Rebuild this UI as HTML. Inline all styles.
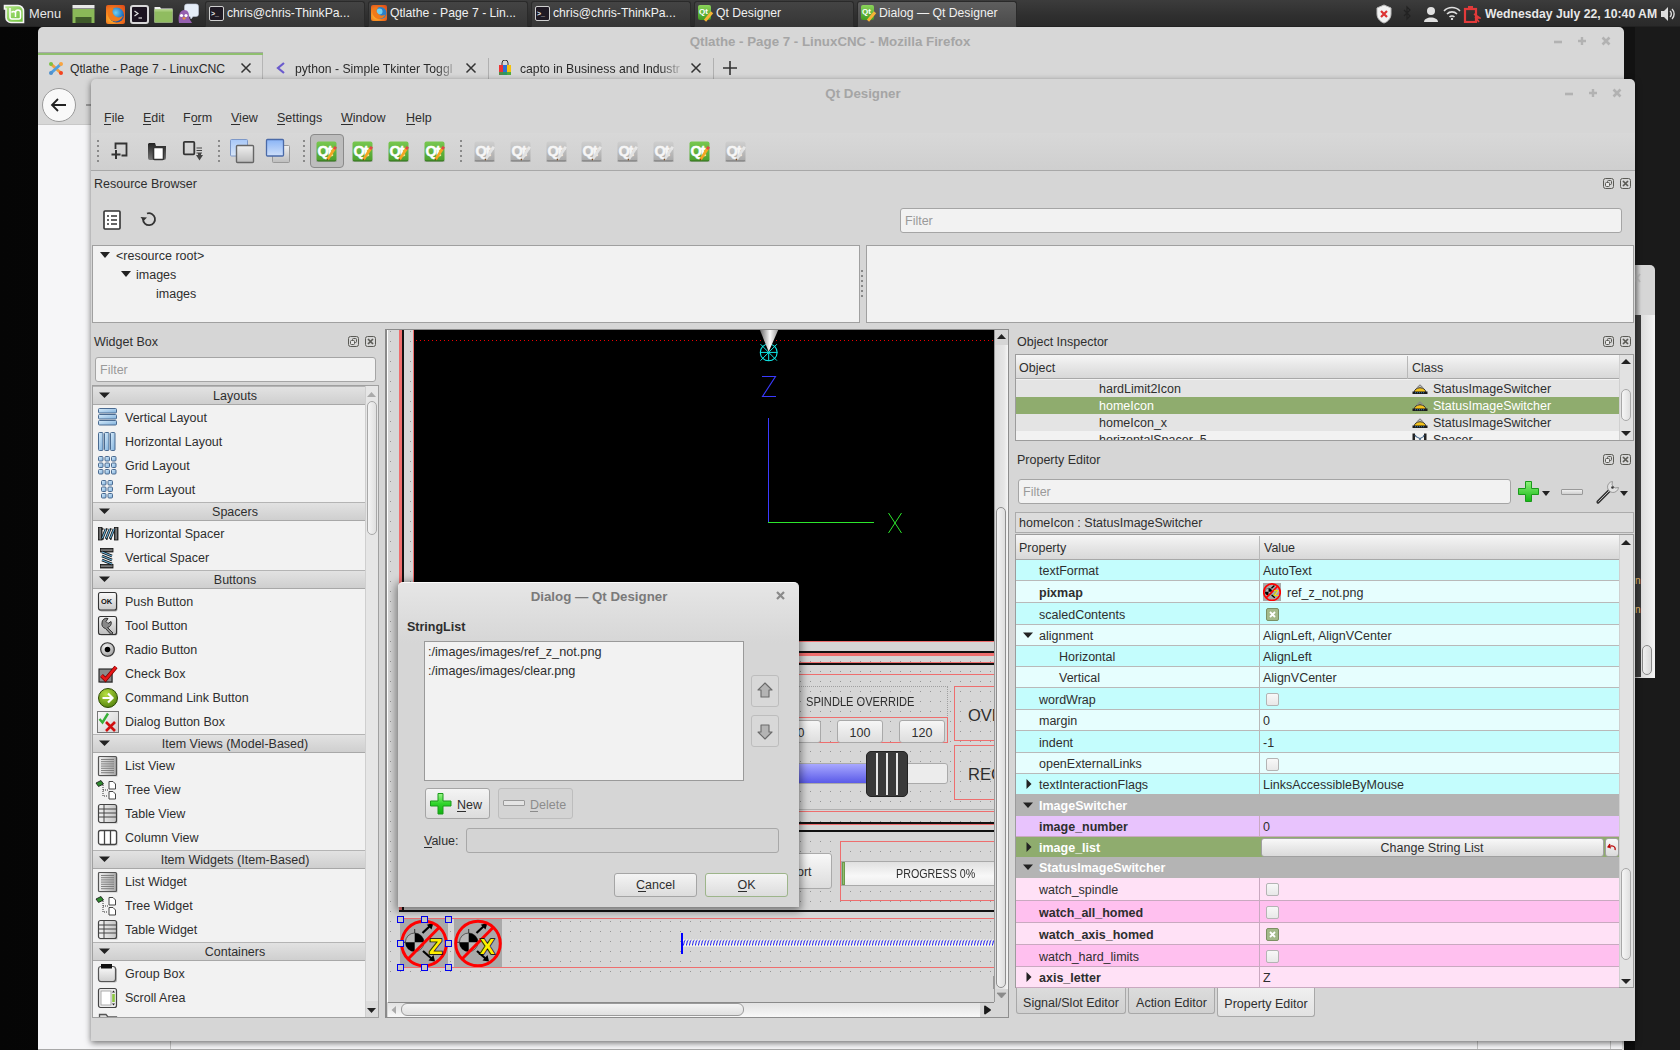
<!DOCTYPE html>
<html><head><meta charset="utf-8">
<style>
*{box-sizing:border-box;margin:0;padding:0}
html,body{width:1680px;height:1050px;overflow:hidden;background:#080808;font-family:"Liberation Sans",sans-serif;font-size:13px;color:#2e2e2e;position:relative}
.a{position:absolute}
.t{position:absolute;white-space:nowrap}
.grid{background-color:#d6d6d6;background-image:radial-gradient(circle at 0.5px 0.5px,#959595 0.6px,transparent 0.9px);background-size:10px 10px}
.redv{background:#ee6e6e}
.hdr{background:linear-gradient(#f6f6f6,#e6e6e6 50%,#d8d8d8);border-bottom:1px solid #a8a8a8}
</style></head><body>
<div class="a" style="left:0px;top:27px;width:1680px;height:1023px;background:linear-gradient(90deg,#050505,#0d0d0d 40%,#141414 70%,#0c0c0c)"></div>
<div class="a" style="left:0px;top:0px;width:1680px;height:27px;background:linear-gradient(#3c3c3c,#2f2f2f 60%,#2a2a2a);border-bottom:1px solid #222"></div>
<svg class="a" style="left:3px;top:4px;" width="22" height="20" viewBox="0 0 22 20"><defs><linearGradient id="mg" x1="0" y1="0" x2="1" y2="1"><stop offset="0" stop-color="#b6e88a"/><stop offset="1" stop-color="#6cbf3a"/></linearGradient></defs><path d="M1.5 1.5 H15 A5.5 5.5 0 0 1 20.5 7 V18.5 H8 A5 5 0 0 1 3 13.5 V5 H1.5 Z" fill="url(#mg)" stroke="#f4f4f4" stroke-width="1.6"/><path d="M7 4 V13 A2 2 0 0 0 9 15 H16 A1.5 1.5 0 0 0 17.5 13.5 V8.5 A2.5 2.5 0 0 0 12.5 8.5 V13 M12.5 8.5 A2.5 2.5 0 0 0 8.5 8.5" fill="none" stroke="#fff" stroke-width="1.5"/></svg>
<div class="t " style="left:29px;top:6.0px;font-size:12.5px;line-height:16px;color:#e8e8e8;font-size:12.8px">Menu</div>
<svg class="a" style="left:72px;top:5px;" width="23" height="18" viewBox="0 0 23 18"><rect x="0.5" y="0" width="22" height="3.5" fill="#e8e8e8"/><rect x="0.5" y="4" width="22" height="14" fill="#8ab858"/><rect x="3.5" y="12" width="16" height="6" fill="#3f5a2a"/></svg>
<svg class="a" style="left:106px;top:5px;" width="19" height="19" viewBox="0 0 19 19"><defs><radialGradient id="ffo" cx=".35" cy=".65" r=".8"><stop offset="0" stop-color="#ffd23a"/><stop offset=".5" stop-color="#f4801e"/><stop offset="1" stop-color="#e0501a"/></radialGradient><radialGradient id="ffb" cx=".45" cy=".35" r=".7"><stop offset="0" stop-color="#6fd0f0"/><stop offset=".6" stop-color="#2a7fc8"/><stop offset="1" stop-color="#1a3f90"/></radialGradient></defs><rect x="0" y="0" width="19" height="19" rx="2" fill="url(#ffo)"/><circle cx="10.5" cy="10" r="7.5" fill="url(#ffb)"/><path d="M2 6 C3 3 6 2 8 4 C6 5 6 8 8 10 C10 13 14 13 17 11 C15 16 9 18 5 15 C2 13 1 9 2 6 Z" fill="#f07a1a"/></svg>
<svg class="a" style="left:130px;top:5px;" width="19" height="19" viewBox="0 0 19 19"><rect x="1" y="1" width="17" height="17" rx="2" fill="#1c1420" stroke="#d8d8d8" stroke-width="2"/><path d="M4.5 6 L8 8.5 L4.5 11" fill="none" stroke="#e0e0e0" stroke-width="1.2"/><path d="M8.5 13 H12" stroke="#e0e0e0" stroke-width="1.2"/></svg>
<svg class="a" style="left:154px;top:5px;" width="19" height="18" viewBox="0 0 19 18"><path d="M0.5 2 H6 L7 3.5 H18.5 V17.5 H0.5 Z" fill="#f2f2f2"/><rect x="0.5" y="4.5" width="18" height="13" fill="#90bc60"/><rect x="0.5" y="4.5" width="18" height="2" fill="#a9ce7e"/></svg>
<svg class="a" style="left:177px;top:3px;" width="22" height="21" viewBox="0 0 22 21"><path d="M10 1 H19 A2.5 2.5 0 0 1 21.5 3.5 V11 A2.5 2.5 0 0 1 19 13.5 H16 L14 16 L13 13.5 H10 A2.5 2.5 0 0 1 7.5 11 V3.5 A2.5 2.5 0 0 1 10 1 Z" fill="#e6eef8" stroke="#c0c8d8" stroke-width=".6"/><path d="M2 20 C1 14 2 8 7 7 C11 7 12 10 12 13 C12 16 14 18 15 20 Z" fill="#9660b0"/><circle cx="4.5" cy="12.5" r="1.6" fill="#fff"/><circle cx="9" cy="12.5" r="1.6" fill="#fff"/><path d="M5 14.5 L7 17 L9.5 14.5 Z" fill="#f09030"/></svg>
<div class="a" style="left:205px;top:1px;width:160px;height:26px;background:linear-gradient(#444,#353535);border-radius:3px 3px 0 0;border:1px solid #2a2a2a;border-bottom:none"></div>
<div class="a" style="left:209px;top:6px;width:15px;height:15px;background:#1f1a24;border:1.5px solid #d0d0d0;border-radius:2px"></div>
<div class="t " style="left:211px;top:8.5px;font-size:7px;line-height:9px;color:#eee;font-weight:bold;">&gt;_</div>
<div class="t " style="left:227px;top:5.0px;font-size:12px;line-height:16px;color:#f0f0f0;font-size:12.2px">chris@chris-ThinkPa...</div>
<div class="a" style="left:368px;top:1px;width:160px;height:26px;background:linear-gradient(#444,#353535);border-radius:3px 3px 0 0;border:1px solid #2a2a2a;border-bottom:none"></div>
<svg class="a" style="left:371px;top:5px;" width="16" height="16" viewBox="0 0 16 16"><defs><radialGradient id="ffo2" cx=".35" cy=".65" r=".8"><stop offset="0" stop-color="#ffd23a"/><stop offset=".5" stop-color="#f4801e"/><stop offset="1" stop-color="#e0501a"/></radialGradient></defs><rect x="0" y="0" width="16" height="16" rx="2" fill="url(#ffo2)"/><circle cx="9.5" cy="8" r="6" fill="#2a7fc8"/><circle cx="8.5" cy="6.5" r="3" fill="#6fd0f0"/><path d="M1.5 5 C2.5 2.5 5 1.5 7 3.5 C5 4.5 5 7 7 8.5 C9 11 12 11 14.5 9.5 C13 13.5 8 15 4.5 13 C1.8 11 1 8 1.5 5 Z" fill="#f07a1a"/></svg>
<div class="t " style="left:390px;top:5.0px;font-size:12px;line-height:16px;color:#f0f0f0;font-size:12.2px">Qtlathe - Page 7 - Lin...</div>
<div class="a" style="left:531px;top:1px;width:160px;height:26px;background:linear-gradient(#444,#353535);border-radius:3px 3px 0 0;border:1px solid #2a2a2a;border-bottom:none"></div>
<div class="a" style="left:535px;top:6px;width:15px;height:15px;background:#1f1a24;border:1.5px solid #d0d0d0;border-radius:2px"></div>
<div class="t " style="left:537px;top:8.5px;font-size:7px;line-height:9px;color:#eee;font-weight:bold;">&gt;_</div>
<div class="t " style="left:553px;top:5.0px;font-size:12px;line-height:16px;color:#f0f0f0;font-size:12.2px">chris@chris-ThinkPa...</div>
<div class="a" style="left:694px;top:1px;width:160px;height:26px;background:linear-gradient(#444,#353535);border-radius:3px 3px 0 0;border:1px solid #2a2a2a;border-bottom:none"></div>
<div class="a" style="left:698px;top:5px;width:13px;height:15px;background:linear-gradient(#8cd45a,#3f9a22);border-radius:2px"></div>
<div class="t " style="left:699px;top:7.0px;font-size:8px;line-height:10px;color:#fff;font-weight:bold;">Qt</div>
<div class="a" style="left:707px;top:11px;width:3px;height:11px;background:#f5b335;transform:rotate(40deg)"></div>
<div class="t " style="left:716px;top:5.0px;font-size:12px;line-height:16px;color:#f0f0f0;font-size:12.2px">Qt Designer</div>
<div class="a" style="left:857px;top:1px;width:160px;height:26px;background:linear-gradient(#5e5e5e,#4a4a4a);border-radius:3px 3px 0 0;border:1px solid #2a2a2a;border-bottom:none"></div>
<div class="a" style="left:861px;top:5px;width:13px;height:15px;background:linear-gradient(#8cd45a,#3f9a22);border-radius:2px"></div>
<div class="t " style="left:862px;top:7.0px;font-size:8px;line-height:10px;color:#fff;font-weight:bold;">Qt</div>
<div class="a" style="left:870px;top:11px;width:3px;height:11px;background:#f5b335;transform:rotate(40deg)"></div>
<div class="t " style="left:879px;top:5.0px;font-size:12px;line-height:16px;color:#f0f0f0;font-size:12.2px">Dialog — Qt Designer</div>
<svg class="a" style="left:1375px;top:4px;" width="18" height="20" viewBox="0 0 18 20"><path d="M9 1 L16 4 V10 C16 15 12 18 9 19 C6 18 2 15 2 10 V4 Z" fill="#f2f2f2" stroke="#bbb"/><path d="M6 7 L12 13 M12 7 L6 13" stroke="#d33" stroke-width="2.2"/></svg>
<svg class="a" style="left:1402px;top:5px;" width="10" height="17" viewBox="0 0 10 17"><path d="M2 5 L8 11 L5 14 V2 L8 5 L2 11" fill="none" stroke="#222" stroke-width="1.2"/></svg>
<svg class="a" style="left:1423px;top:6px;" width="16" height="16" viewBox="0 0 16 16"><circle cx="8" cy="5" r="4" fill="#e0e0e0"/><path d="M1 16 C1 10 15 10 15 16 Z" fill="#e0e0e0"/></svg>
<svg class="a" style="left:1443px;top:6px;" width="18" height="14" viewBox="0 0 18 14"><path d="M1 5 A11 11 0 0 1 17 5" fill="none" stroke="#ddd" stroke-width="1.6"/><path d="M4 8 A7 7 0 0 1 14 8" fill="none" stroke="#ddd" stroke-width="1.6"/><path d="M6.5 11 A3.5 3.5 0 0 1 11.5 11" fill="none" stroke="#ddd" stroke-width="1.6"/><circle cx="9" cy="13" r="1.2" fill="#ddd"/></svg>
<svg class="a" style="left:1463px;top:5px;" width="18" height="18" viewBox="0 0 18 18"><rect x="2" y="4" width="11" height="13" fill="none" stroke="#e23a3a" stroke-width="2.2"/><rect x="5" y="1" width="5" height="3" fill="#e23a3a"/><path d="M11 9 L17 13 L13 13 L16 17" fill="none" stroke="#e23a3a" stroke-width="1.6"/></svg>
<div class="t " style="left:1485px;top:6.0px;font-size:13px;line-height:16px;color:#e8e8e8;font-weight:bold;font-size:12.2px">Wednesday July 22, 10:40 AM</div>
<svg class="a" style="left:1660px;top:6px;" width="18" height="16" viewBox="0 0 18 16"><path d="M1 5 H4 L8 1 V15 L4 11 H1 Z" fill="#ddd"/><path d="M10 5 A4 4 0 0 1 10 11 M12 3 A7 7 0 0 1 12 13" fill="none" stroke="#ddd" stroke-width="1.4"/></svg>
<div class="a" style="left:38px;top:27px;width:1586px;height:1023px;background:#d7d7d7;border-radius:5px 5px 0 0"></div>
<div class="t" style="left:580.0px;width:500px;text-align:center;top:34.0px;font-size:13px;line-height:16px;color:#a5a5a5;font-weight:bold;font-size:13.3px">Qtlathe - Page 7 - LinuxCNC - Mozilla Firefox</div>
<svg class="a" style="left:1550px;top:33px;" width="64" height="14" viewBox="0 0 64 14"><path d="M4 9 H12" stroke="#b2b2b2" stroke-width="2.6"/><path d="M32 4 V12 M28 8 H36" stroke="#b2b2b2" stroke-width="2.4"/><path d="M52.5 4.5 L59.5 11.5 M59.5 4.5 L52.5 11.5" stroke="#b2b2b2" stroke-width="2.6"/></svg>
<div class="a" style="left:38px;top:52px;width:225px;height:1px;background:#a9a9a9"></div>
<div class="a" style="left:38px;top:79px;width:1584px;height:1px;background:#b8b8b8"></div>
<div class="a" style="left:38px;top:53px;width:225px;height:27px;background:#d9d9d9;border-right:1px solid #b5b5b5"></div>
<div class="a" style="left:38px;top:53px;width:225px;height:2px;background:#8fbf6f"></div>
<svg class="a" style="left:48px;top:61px;" width="16" height="15" viewBox="0 0 16 15"><path d="M3 3 L13 12" stroke="#f0a040" stroke-width="3"/><path d="M13 3 L3 12" stroke="#50a0e0" stroke-width="3"/><circle cx="3" cy="3" r="2" fill="#7ac143"/><circle cx="13" cy="3" r="2" fill="#f9a541"/><circle cx="3" cy="12" r="2" fill="#5091cd"/><circle cx="13" cy="12" r="2" fill="#f44321"/></svg>
<div class="t " style="left:70px;top:61.0px;font-size:12px;line-height:16px;color:#2a2a2a;font-size:12.2px">Qtlathe - Page 7 - LinuxCNC</div>
<svg class="a" style="left:240px;top:62px;" width="12" height="12" viewBox="0 0 12 12"><path d="M1.5 1.5 L10.5 10.5 M10.5 1.5 L1.5 10.5" stroke="#333" stroke-width="1.5"/></svg>
<svg class="a" style="left:276px;top:62px;" width="10" height="12" viewBox="0 0 10 12"><path d="M8 1 L2 6 L8 11" fill="none" stroke="#6a5acd" stroke-width="2.2"/></svg>
<div class="t " style="left:295px;top:61.0px;font-size:12px;line-height:16px;color:#2a2a2a;font-size:12.2px;width:165px;overflow:hidden;-webkit-mask-image:linear-gradient(90deg,#000 85%,transparent)">python - Simple Tkinter Toggl</div>
<svg class="a" style="left:465px;top:62px;" width="12" height="12" viewBox="0 0 12 12"><path d="M1.5 1.5 L10.5 10.5 M10.5 1.5 L1.5 10.5" stroke="#333" stroke-width="1.5"/></svg>
<div class="a" style="left:488px;top:58px;width:1px;height:21px;background:#b0b0b0"></div>
<svg class="a" style="left:498px;top:60px;" width="14" height="16" viewBox="0 0 14 16"><rect x="1" y="5" width="4" height="10" fill="#e33"/><rect x="5" y="5" width="4" height="10" fill="#2c6fd6"/><rect x="9" y="5" width="4" height="10" fill="#f4c20d"/><rect x="1" y="12" width="12" height="3" fill="#2ca24a" opacity=".8"/><path d="M4 5 V3 A3 3 0 0 1 10 3 V5" fill="none" stroke="#333" stroke-width="1"/></svg>
<div class="t " style="left:520px;top:61.0px;font-size:12px;line-height:16px;color:#2a2a2a;font-size:12.2px;width:165px;overflow:hidden;-webkit-mask-image:linear-gradient(90deg,#000 85%,transparent)">capto in Business and Industr</div>
<svg class="a" style="left:690px;top:62px;" width="12" height="12" viewBox="0 0 12 12"><path d="M1.5 1.5 L10.5 10.5 M10.5 1.5 L1.5 10.5" stroke="#333" stroke-width="1.5"/></svg>
<div class="a" style="left:713px;top:58px;width:1px;height:21px;background:#b0b0b0"></div>
<svg class="a" style="left:723px;top:61px;" width="14" height="14" viewBox="0 0 14 14"><path d="M7 0 V14 M0 7 H14" stroke="#333" stroke-width="1.6"/></svg>
<div class="a" style="left:38px;top:80px;width:1584px;height:45px;background:#d7d7d7"></div>
<div class="a" style="left:38px;top:124px;width:1584px;height:1px;background:#c8c8c8"></div>
<div class="a" style="left:42px;top:88px;width:34px;height:34px;background:#f9f9f9;border:1px solid #9a9a9a;border-radius:50%"></div>
<svg class="a" style="left:50px;top:97px;" width="18" height="16" viewBox="0 0 18 16"><path d="M8 2 L2 8 L8 14 M2 8 H16" fill="none" stroke="#222" stroke-width="1.8"/></svg>
<div class="a" style="left:86px;top:104px;width:6px;height:2px;background:#999"></div>
<div class="a" style="left:38px;top:125px;width:1584px;height:925px;background:#f6f6f8"></div>
<div class="a" style="left:38px;top:1049px;width:1584px;height:1px;background:#a8a8a8"></div>
<div class="a" style="left:170px;top:1040px;width:1px;height:9px;background:#c4c4c4"></div>
<div class="a" style="left:1477px;top:1040px;width:1px;height:9px;background:#c4c4c4"></div>
<div class="a" style="left:1610px;top:1040px;width:1px;height:9px;background:#c4c4c4"></div>
<div class="a" style="left:1635px;top:27px;width:45px;height:1023px;background:#1a1a1a"></div>
<div class="a" style="left:1624px;top:27px;width:11px;height:1013px;background:#121212"></div>
<div class="a" style="left:1635px;top:265px;width:20px;height:413px;background:linear-gradient(90deg,#a8a8a8,#d6d6d6 6px);border-radius:0 5px 0 0"></div>
<svg class="a" style="left:1634px;top:273px;" width="8" height="11" viewBox="0 0 8 11"><path d="M0 1 L6 9 M6 1 L0 9" stroke="#b4b4b4" stroke-width="1.8"/></svg>
<div class="a" style="left:1635px;top:315px;width:6px;height:362px;background:#3a3a3a"></div>
<div class="a" style="left:1641px;top:315px;width:14px;height:363px;background:linear-gradient(90deg,#dcdcdc,#f4f4f4)"></div>
<div class="a" style="left:1642px;top:645px;width:10px;height:30px;background:linear-gradient(90deg,#f0f0f0,#dadada);border:1px solid #8a8a8a;border-radius:5px"></div>
<div class="t " style="left:1635px;top:576.0px;font-size:10px;line-height:10px;color:#e8c070;">n</div>
<div class="t " style="left:1635px;top:605.0px;font-size:10px;line-height:10px;color:#e8c070;">n</div>
<div class="a" style="left:91px;top:79px;width:1544px;height:962px;background:#d6d6d6;border-radius:5px 5px 0 0;box-shadow:0 2px 6px rgba(0,0,0,.55)"></div>
<div class="t" style="left:713.0px;width:300px;text-align:center;top:86.0px;font-size:13px;line-height:16px;color:#a5a5a5;font-weight:bold;font-size:13.3px">Qt Designer</div>
<svg class="a" style="left:1561px;top:85px;" width="64" height="14" viewBox="0 0 64 14"><path d="M4 9 H12" stroke="#b2b2b2" stroke-width="2.6"/><path d="M32 4 V12 M28 8 H36" stroke="#b2b2b2" stroke-width="2.4"/><path d="M52.5 4.5 L59.5 11.5 M59.5 4.5 L52.5 11.5" stroke="#b2b2b2" stroke-width="2.6"/></svg>
<div class="t " style="left:104px;top:110.0px;font-size:12.5px;line-height:16px;color:#2e2e2e;">File</div>
<div class="t " style="left:143px;top:110.0px;font-size:12.5px;line-height:16px;color:#2e2e2e;">Edit</div>
<div class="t " style="left:183px;top:110.0px;font-size:12.5px;line-height:16px;color:#2e2e2e;">Form</div>
<div class="t " style="left:231px;top:110.0px;font-size:12.5px;line-height:16px;color:#2e2e2e;">View</div>
<div class="t " style="left:277px;top:110.0px;font-size:12.5px;line-height:16px;color:#2e2e2e;">Settings</div>
<div class="t " style="left:341px;top:110.0px;font-size:12.5px;line-height:16px;color:#2e2e2e;">Window</div>
<div class="t " style="left:406px;top:110.0px;font-size:12.5px;line-height:16px;color:#2e2e2e;">Help</div>
<div class="a" style="left:104px;top:124px;width:7px;height:1px;background:#2e2e2e"></div>
<div class="a" style="left:143px;top:124px;width:8px;height:1px;background:#2e2e2e"></div>
<div class="a" style="left:193px;top:124px;width:8px;height:1px;background:#2e2e2e"></div>
<div class="a" style="left:231px;top:124px;width:9px;height:1px;background:#2e2e2e"></div>
<div class="a" style="left:277px;top:124px;width:8px;height:1px;background:#2e2e2e"></div>
<div class="a" style="left:341px;top:124px;width:12px;height:1px;background:#2e2e2e"></div>
<div class="a" style="left:406px;top:124px;width:9px;height:1px;background:#2e2e2e"></div>
<div class="a" style="left:91px;top:133px;width:1544px;height:38px;background:linear-gradient(#d8d8d8,#cfcfcf);border-bottom:1px solid #a8a8a8"></div>
<div class="a" style="left:97px;top:140px;width:2px;height:23px;background:repeating-linear-gradient(#8a8a8a 0 2px,transparent 2px 5px)"></div>
<div class="a" style="left:218px;top:140px;width:2px;height:23px;background:repeating-linear-gradient(#8a8a8a 0 2px,transparent 2px 5px)"></div>
<div class="a" style="left:303px;top:140px;width:2px;height:23px;background:repeating-linear-gradient(#8a8a8a 0 2px,transparent 2px 5px)"></div>
<div class="a" style="left:460px;top:140px;width:2px;height:23px;background:repeating-linear-gradient(#8a8a8a 0 2px,transparent 2px 5px)"></div>
<svg class="a" style="left:110px;top:141px;" width="20" height="20" viewBox="0 0 20 20"><path d="M5.5 8 V2.5 H16.5 V14.5 H11.5" fill="none" stroke="#333" stroke-width="1.8"/><path d="M6 9 V18 M1.5 13.5 H10.5" stroke="#333" stroke-width="2"/></svg>
<svg class="a" style="left:147px;top:141px;" width="20" height="20" viewBox="0 0 20 20"><defs><linearGradient id="og" x1="0" x2="0" y1="0" y2="1"><stop offset="0" stop-color="#222"/><stop offset="1" stop-color="#777"/></linearGradient></defs><path d="M1 3 V17 A2 2 0 0 0 3 19 H17 A2 2 0 0 0 19 17 V5 H9 L8 2 H2 Z" fill="url(#og)"/><rect x="6.5" y="6.5" width="10" height="12" rx="1" fill="#fff" stroke="#333" stroke-width="1.6"/></svg>
<svg class="a" style="left:182px;top:140px;" width="22" height="22" viewBox="0 0 22 22"><rect x="1.8" y="1.8" width="10.5" height="12.5" rx="1" fill="none" stroke="#333" stroke-width="1.8"/><path d="M14.5 8 H20 M14.5 10.5 H20 M14.5 13 H20" stroke="#444" stroke-width="1.2"/><path d="M14 15 H21 L17.5 20.5 Z" fill="#444"/><rect x="16" y="13" width="3" height="3" fill="#444"/></svg>
<svg class="a" style="left:229px;top:138px;" width="26" height="26" viewBox="0 0 26 26"><defs><linearGradient id="bl" x1="0" x2="0" y1="0" y2="1"><stop offset="0" stop-color="#a8c8f8"/><stop offset="1" stop-color="#d8e6f8"/></linearGradient><linearGradient id="gr" x1="0" x2="0" y1="0" y2="1"><stop offset="0" stop-color="#f0f0f0"/><stop offset="1" stop-color="#bdbdbd"/></linearGradient></defs><rect x="1.5" y="1.5" width="17" height="16.5" rx="1" fill="url(#bl)" stroke="#7d98c8" stroke-width="1"/><rect x="7.5" y="7.5" width="17" height="17" rx="1" fill="url(#gr)" stroke="#666" stroke-width="1.4"/></svg>
<svg class="a" style="left:265px;top:138px;" width="26" height="26" viewBox="0 0 26 26"><defs><linearGradient id="bl2" x1="0" x2="0" y1="0" y2="1"><stop offset="0" stop-color="#8ab4f6"/><stop offset="1" stop-color="#cfe0fa"/></linearGradient></defs><rect x="7.5" y="7.5" width="17" height="17" rx="1" fill="url(#gr)" stroke="#999" stroke-width="1"/><rect x="1.5" y="1.5" width="17" height="16.5" rx="1" fill="url(#bl2)" stroke="#4a6aa8" stroke-width="1.3"/></svg>
<div class="a" style="left:310px;top:134px;width:34px;height:34px;background:#bdbdbd;border:1px solid #8a8a8a;border-radius:4px"></div>
<svg class="a" style="left:316px;top:141px;" width="21" height="21" viewBox="0 0 21 21"><defs><linearGradient id="q316" x1="0" x2="0" y1="0" y2="1"><stop offset="0" stop-color="#78c850"/><stop offset="1" stop-color="#4a9e2c"/></linearGradient></defs><rect x="0.5" y="0.5" width="20" height="20" rx="2" fill="url(#q316)"/><rect x="0.5" y="19.5" width="20" height="1" fill="rgba(0,0,0,.35)"/><text x="1.4" y="14.5" font-family="Liberation Sans" font-weight="700" font-size="14.5" letter-spacing="-0.8" fill="#fff" stroke="#fff" stroke-width="0.5">Qt</text><path d="M11.5 18.5 L19 7" stroke="#f5a623" stroke-width="2.8" stroke-linecap="butt"/><path d="M18.2 8.2 L19.8 5.8" stroke="#e04848" stroke-width="2.8"/><path d="M11 19.2 L12 17.8" stroke="#7a4a20" stroke-width="1.2"/></svg>
<svg class="a" style="left:352px;top:141px;" width="21" height="21" viewBox="0 0 21 21"><defs><linearGradient id="q352" x1="0" x2="0" y1="0" y2="1"><stop offset="0" stop-color="#78c850"/><stop offset="1" stop-color="#4a9e2c"/></linearGradient></defs><rect x="0.5" y="0.5" width="20" height="20" rx="2" fill="url(#q352)"/><rect x="0.5" y="19.5" width="20" height="1" fill="rgba(0,0,0,.35)"/><text x="1.4" y="14.5" font-family="Liberation Sans" font-weight="700" font-size="14.5" letter-spacing="-0.8" fill="#fff" stroke="#fff" stroke-width="0.5">Qt</text><path d="M11.5 18.5 L19 7" stroke="#f5a623" stroke-width="2.8" stroke-linecap="butt"/><path d="M18.2 8.2 L19.8 5.8" stroke="#e04848" stroke-width="2.8"/><path d="M11 19.2 L12 17.8" stroke="#7a4a20" stroke-width="1.2"/></svg>
<svg class="a" style="left:388px;top:141px;" width="21" height="21" viewBox="0 0 21 21"><defs><linearGradient id="q388" x1="0" x2="0" y1="0" y2="1"><stop offset="0" stop-color="#78c850"/><stop offset="1" stop-color="#4a9e2c"/></linearGradient></defs><rect x="0.5" y="0.5" width="20" height="20" rx="2" fill="url(#q388)"/><rect x="0.5" y="19.5" width="20" height="1" fill="rgba(0,0,0,.35)"/><text x="1.4" y="14.5" font-family="Liberation Sans" font-weight="700" font-size="14.5" letter-spacing="-0.8" fill="#fff" stroke="#fff" stroke-width="0.5">Qt</text><path d="M11.5 18.5 L19 7" stroke="#f5a623" stroke-width="2.8" stroke-linecap="butt"/><path d="M18.2 8.2 L19.8 5.8" stroke="#e04848" stroke-width="2.8"/><path d="M11 19.2 L12 17.8" stroke="#7a4a20" stroke-width="1.2"/></svg>
<svg class="a" style="left:424px;top:141px;" width="21" height="21" viewBox="0 0 21 21"><defs><linearGradient id="q424" x1="0" x2="0" y1="0" y2="1"><stop offset="0" stop-color="#78c850"/><stop offset="1" stop-color="#4a9e2c"/></linearGradient></defs><rect x="0.5" y="0.5" width="20" height="20" rx="2" fill="url(#q424)"/><rect x="0.5" y="19.5" width="20" height="1" fill="rgba(0,0,0,.35)"/><text x="1.4" y="14.5" font-family="Liberation Sans" font-weight="700" font-size="14.5" letter-spacing="-0.8" fill="#fff" stroke="#fff" stroke-width="0.5">Qt</text><path d="M11.5 18.5 L19 7" stroke="#f5a623" stroke-width="2.8" stroke-linecap="butt"/><path d="M18.2 8.2 L19.8 5.8" stroke="#e04848" stroke-width="2.8"/><path d="M11 19.2 L12 17.8" stroke="#7a4a20" stroke-width="1.2"/></svg>
<svg class="a" style="left:474px;top:141px;" width="21" height="21" viewBox="0 0 21 21"><defs><linearGradient id="q474" x1="0" x2="0" y1="0" y2="1"><stop offset="0" stop-color="#cfcfcf"/><stop offset="1" stop-color="#a9a9a9"/></linearGradient></defs><rect x="0.5" y="0.5" width="20" height="20" rx="2" fill="url(#q474)"/><rect x="0.5" y="19.5" width="20" height="1" fill="rgba(0,0,0,.35)"/><text x="1.4" y="14.5" font-family="Liberation Sans" font-weight="700" font-size="14.5" letter-spacing="-0.8" fill="#f6f6f6" stroke="#f6f6f6" stroke-width="0.5">Qt</text><path d="M11.5 18.5 L19 7" stroke="#e2e2e2" stroke-width="2.8" stroke-linecap="butt"/><path d="M18.2 8.2 L19.8 5.8" stroke="#e8e8e8" stroke-width="2.8"/><path d="M11 19.2 L12 17.8" stroke="#7a4a20" stroke-width="1.2"/></svg>
<svg class="a" style="left:510px;top:141px;" width="21" height="21" viewBox="0 0 21 21"><defs><linearGradient id="q510" x1="0" x2="0" y1="0" y2="1"><stop offset="0" stop-color="#cfcfcf"/><stop offset="1" stop-color="#a9a9a9"/></linearGradient></defs><rect x="0.5" y="0.5" width="20" height="20" rx="2" fill="url(#q510)"/><rect x="0.5" y="19.5" width="20" height="1" fill="rgba(0,0,0,.35)"/><text x="1.4" y="14.5" font-family="Liberation Sans" font-weight="700" font-size="14.5" letter-spacing="-0.8" fill="#f6f6f6" stroke="#f6f6f6" stroke-width="0.5">Qt</text><path d="M11.5 18.5 L19 7" stroke="#e2e2e2" stroke-width="2.8" stroke-linecap="butt"/><path d="M18.2 8.2 L19.8 5.8" stroke="#e8e8e8" stroke-width="2.8"/><path d="M11 19.2 L12 17.8" stroke="#7a4a20" stroke-width="1.2"/></svg>
<svg class="a" style="left:546px;top:141px;" width="21" height="21" viewBox="0 0 21 21"><defs><linearGradient id="q546" x1="0" x2="0" y1="0" y2="1"><stop offset="0" stop-color="#cfcfcf"/><stop offset="1" stop-color="#a9a9a9"/></linearGradient></defs><rect x="0.5" y="0.5" width="20" height="20" rx="2" fill="url(#q546)"/><rect x="0.5" y="19.5" width="20" height="1" fill="rgba(0,0,0,.35)"/><text x="1.4" y="14.5" font-family="Liberation Sans" font-weight="700" font-size="14.5" letter-spacing="-0.8" fill="#f6f6f6" stroke="#f6f6f6" stroke-width="0.5">Qt</text><path d="M11.5 18.5 L19 7" stroke="#e2e2e2" stroke-width="2.8" stroke-linecap="butt"/><path d="M18.2 8.2 L19.8 5.8" stroke="#e8e8e8" stroke-width="2.8"/><path d="M11 19.2 L12 17.8" stroke="#7a4a20" stroke-width="1.2"/></svg>
<svg class="a" style="left:581px;top:141px;" width="21" height="21" viewBox="0 0 21 21"><defs><linearGradient id="q581" x1="0" x2="0" y1="0" y2="1"><stop offset="0" stop-color="#cfcfcf"/><stop offset="1" stop-color="#a9a9a9"/></linearGradient></defs><rect x="0.5" y="0.5" width="20" height="20" rx="2" fill="url(#q581)"/><rect x="0.5" y="19.5" width="20" height="1" fill="rgba(0,0,0,.35)"/><text x="1.4" y="14.5" font-family="Liberation Sans" font-weight="700" font-size="14.5" letter-spacing="-0.8" fill="#f6f6f6" stroke="#f6f6f6" stroke-width="0.5">Qt</text><path d="M11.5 18.5 L19 7" stroke="#e2e2e2" stroke-width="2.8" stroke-linecap="butt"/><path d="M18.2 8.2 L19.8 5.8" stroke="#e8e8e8" stroke-width="2.8"/><path d="M11 19.2 L12 17.8" stroke="#7a4a20" stroke-width="1.2"/></svg>
<svg class="a" style="left:617px;top:141px;" width="21" height="21" viewBox="0 0 21 21"><defs><linearGradient id="q617" x1="0" x2="0" y1="0" y2="1"><stop offset="0" stop-color="#cfcfcf"/><stop offset="1" stop-color="#a9a9a9"/></linearGradient></defs><rect x="0.5" y="0.5" width="20" height="20" rx="2" fill="url(#q617)"/><rect x="0.5" y="19.5" width="20" height="1" fill="rgba(0,0,0,.35)"/><text x="1.4" y="14.5" font-family="Liberation Sans" font-weight="700" font-size="14.5" letter-spacing="-0.8" fill="#f6f6f6" stroke="#f6f6f6" stroke-width="0.5">Qt</text><path d="M11.5 18.5 L19 7" stroke="#e2e2e2" stroke-width="2.8" stroke-linecap="butt"/><path d="M18.2 8.2 L19.8 5.8" stroke="#e8e8e8" stroke-width="2.8"/><path d="M11 19.2 L12 17.8" stroke="#7a4a20" stroke-width="1.2"/></svg>
<svg class="a" style="left:653px;top:141px;" width="21" height="21" viewBox="0 0 21 21"><defs><linearGradient id="q653" x1="0" x2="0" y1="0" y2="1"><stop offset="0" stop-color="#cfcfcf"/><stop offset="1" stop-color="#a9a9a9"/></linearGradient></defs><rect x="0.5" y="0.5" width="20" height="20" rx="2" fill="url(#q653)"/><rect x="0.5" y="19.5" width="20" height="1" fill="rgba(0,0,0,.35)"/><text x="1.4" y="14.5" font-family="Liberation Sans" font-weight="700" font-size="14.5" letter-spacing="-0.8" fill="#f6f6f6" stroke="#f6f6f6" stroke-width="0.5">Qt</text><path d="M11.5 18.5 L19 7" stroke="#e2e2e2" stroke-width="2.8" stroke-linecap="butt"/><path d="M18.2 8.2 L19.8 5.8" stroke="#e8e8e8" stroke-width="2.8"/><path d="M11 19.2 L12 17.8" stroke="#7a4a20" stroke-width="1.2"/></svg>
<svg class="a" style="left:689px;top:141px;" width="21" height="21" viewBox="0 0 21 21"><defs><linearGradient id="q689" x1="0" x2="0" y1="0" y2="1"><stop offset="0" stop-color="#78c850"/><stop offset="1" stop-color="#4a9e2c"/></linearGradient></defs><rect x="0.5" y="0.5" width="20" height="20" rx="2" fill="url(#q689)"/><rect x="0.5" y="19.5" width="20" height="1" fill="rgba(0,0,0,.35)"/><text x="1.4" y="14.5" font-family="Liberation Sans" font-weight="700" font-size="14.5" letter-spacing="-0.8" fill="#fff" stroke="#fff" stroke-width="0.5">Qt</text><path d="M11.5 18.5 L19 7" stroke="#f5a623" stroke-width="2.8" stroke-linecap="butt"/><path d="M18.2 8.2 L19.8 5.8" stroke="#e04848" stroke-width="2.8"/><path d="M11 19.2 L12 17.8" stroke="#7a4a20" stroke-width="1.2"/></svg>
<svg class="a" style="left:725px;top:141px;" width="21" height="21" viewBox="0 0 21 21"><defs><linearGradient id="q725" x1="0" x2="0" y1="0" y2="1"><stop offset="0" stop-color="#cfcfcf"/><stop offset="1" stop-color="#a9a9a9"/></linearGradient></defs><rect x="0.5" y="0.5" width="20" height="20" rx="2" fill="url(#q725)"/><rect x="0.5" y="19.5" width="20" height="1" fill="rgba(0,0,0,.35)"/><text x="1.4" y="14.5" font-family="Liberation Sans" font-weight="700" font-size="14.5" letter-spacing="-0.8" fill="#f6f6f6" stroke="#f6f6f6" stroke-width="0.5">Qt</text><path d="M11.5 18.5 L19 7" stroke="#e2e2e2" stroke-width="2.8" stroke-linecap="butt"/><path d="M18.2 8.2 L19.8 5.8" stroke="#e8e8e8" stroke-width="2.8"/><path d="M11 19.2 L12 17.8" stroke="#7a4a20" stroke-width="1.2"/></svg>
<div class="t " style="left:94px;top:176.0px;font-size:12.5px;line-height:16px;color:#2e2e2e;">Resource Browser</div>
<svg class="a" style="left:1603px;top:178px;" width="29" height="12" viewBox="0 0 29 12"><rect x="0.5" y="0.5" width="10" height="10" rx="2" fill="none" stroke="#5a5a55" stroke-width="1"/><rect x="4.5" y="2.5" width="4" height="4" rx="1" fill="none" stroke="#5a5a55" stroke-width="1"/><rect x="2.5" y="4.5" width="4" height="4" rx="1" fill="#e8e8e8" stroke="#5a5a55" stroke-width="1"/><rect x="17.5" y="0.5" width="10" height="10" rx="2" fill="none" stroke="#5a5a55" stroke-width="1"/><path d="M20 3 L25 8 M25 3 L20 8" stroke="#5a5a55" stroke-width="1.7"/></svg>
<svg class="a" style="left:103px;top:210px;" width="18" height="20" viewBox="0 0 18 20"><rect x="1" y="1" width="16" height="18" rx="1" fill="#fff" stroke="#333" stroke-width="1.6"/><path d="M4 6 H6 M8 6 H14 M4 10 H6 M8 10 H14 M4 14 H6 M8 14 H14" stroke="#333" stroke-width="1.5"/></svg>
<svg class="a" style="left:139px;top:210px;" width="18" height="18" viewBox="0 0 18 18"><path d="M4 9 A6 6 0 1 0 8 3.5" fill="none" stroke="#333" stroke-width="1.8"/><path d="M1.5 7 L4.5 11 L8 7.5 Z" fill="#333"/></svg>
<div class="a" style="left:900px;top:208px;width:722px;height:25px;background:#f2f2f2;border:1px solid #a5a5a5;border-radius:3px"></div>
<div class="t " style="left:905px;top:212.5px;font-size:12.5px;line-height:16px;color:#9a9a9a;">Filter</div>
<div class="a" style="left:92px;top:245px;width:768px;height:78px;background:#f2f2f2;border:1px solid #a0a0a0"></div>
<svg class="a" style="left:100px;top:251px;" width="10" height="8" viewBox="0 0 10 8"><path d="M0 1 H10 L5 7 Z" fill="#222"/></svg>
<div class="t " style="left:116px;top:248.0px;font-size:12.5px;line-height:16px;">&lt;resource root&gt;</div>
<svg class="a" style="left:121px;top:270px;" width="10" height="8" viewBox="0 0 10 8"><path d="M0 1 H10 L5 7 Z" fill="#222"/></svg>
<div class="t " style="left:136px;top:267.0px;font-size:12.5px;line-height:16px;">images</div>
<div class="t " style="left:156px;top:286.0px;font-size:12.5px;line-height:16px;">images</div>
<div class="a" style="left:866px;top:245px;width:768px;height:78px;background:#f2f2f2;border:1px solid #a0a0a0"></div>
<div class="a" style="left:861px;top:270px;width:2px;height:28px;background:repeating-linear-gradient(#888 0 2px,transparent 2px 5px)"></div>
<div class="t " style="left:94px;top:334.0px;font-size:12.5px;line-height:16px;">Widget Box</div>
<svg class="a" style="left:348px;top:336px;" width="29" height="12" viewBox="0 0 29 12"><rect x="0.5" y="0.5" width="10" height="10" rx="2" fill="none" stroke="#5a5a55" stroke-width="1"/><rect x="4.5" y="2.5" width="4" height="4" rx="1" fill="none" stroke="#5a5a55" stroke-width="1"/><rect x="2.5" y="4.5" width="4" height="4" rx="1" fill="#e8e8e8" stroke="#5a5a55" stroke-width="1"/><rect x="17.5" y="0.5" width="10" height="10" rx="2" fill="none" stroke="#5a5a55" stroke-width="1"/><path d="M20 3 L25 8 M25 3 L20 8" stroke="#5a5a55" stroke-width="1.7"/></svg>
<div class="a" style="left:95px;top:357px;width:281px;height:25px;background:#f2f2f2;border:1px solid #a5a5a5;border-radius:3px"></div>
<div class="t " style="left:100px;top:361.5px;font-size:12.5px;line-height:16px;color:#9a9a9a;">Filter</div>
<div class="a" style="left:92px;top:385px;width:287px;height:633px;background:#f2f2f2;border:1px solid #a0a0a0"></div>
<div class="a" style="left:365px;top:386px;width:13px;height:631px;background:#e6e6e6;border-left:1px solid #cfcfcf"></div>
<svg class="a" style="left:366px;top:390px;" width="11" height="8" viewBox="0 0 11 8"><path d="M1 7 H10 L5.5 2 Z" fill="#aaa"/></svg>
<div class="a" style="left:366px;top:1001px;width:12px;height:16px;background:#dcdcdc"></div>
<svg class="a" style="left:366px;top:1007px;" width="11" height="8" viewBox="0 0 11 8"><path d="M1 1 H10 L5.5 6 Z" fill="#222"/></svg>
<div class="a" style="left:367px;top:401px;width:10px;height:134px;background:linear-gradient(90deg,#f4f4f4,#e0e0e0);border:1px solid #a8a8a8;border-radius:5px"></div>
<div class="a" style="left:93px;top:386px;width:272px;height:19px;background:linear-gradient(#e2e2e2,#cfcfcf);border-top:1px solid #b4b4b4;border-bottom:1px solid #a8a8a8"></div>
<svg class="a" style="left:99px;top:392px;" width="11" height="7" viewBox="0 0 11 7"><path d="M0 0.5 H11 L5.5 6 Z" fill="#222"/></svg>
<div class="t" style="left:105.0px;width:260px;text-align:center;top:388.0px;font-size:12.5px;line-height:16px;">Layouts</div>
<svg class="a" style="left:97px;top:407px;" width="22" height="22" viewBox="0 0 22 22"><defs><linearGradient id="lyg" x1="0" x2="1" y1="0" y2="1"><stop offset="0" stop-color="#d8ecfa"/><stop offset="1" stop-color="#7fb0dc"/></linearGradient></defs><rect x="1.5" y="1.5" width="18" height="4.5" rx="1" fill="url(#lyg)" stroke="#4a6a90" stroke-width="1"/><rect x="1.5" y="7.5" width="18" height="4.5" rx="1" fill="url(#lyg)" stroke="#4a6a90" stroke-width="1"/><rect x="1.5" y="13.5" width="18" height="4.5" rx="1" fill="url(#lyg)" stroke="#4a6a90" stroke-width="1"/></svg>
<div class="t " style="left:125px;top:410.0px;font-size:12.5px;line-height:16px;">Vertical Layout</div>
<svg class="a" style="left:97px;top:431px;" width="22" height="22" viewBox="0 0 22 22"><defs><linearGradient id="lyg" x1="0" x2="1" y1="0" y2="1"><stop offset="0" stop-color="#d8ecfa"/><stop offset="1" stop-color="#7fb0dc"/></linearGradient></defs><rect x="1.5" y="1.5" width="4.5" height="18" rx="1" fill="url(#lyg)" stroke="#4a6a90" stroke-width="1"/><rect x="7.5" y="1.5" width="4.5" height="18" rx="1" fill="url(#lyg)" stroke="#4a6a90" stroke-width="1"/><rect x="13.5" y="1.5" width="4.5" height="18" rx="1" fill="url(#lyg)" stroke="#4a6a90" stroke-width="1"/></svg>
<div class="t " style="left:125px;top:434.0px;font-size:12.5px;line-height:16px;">Horizontal Layout</div>
<svg class="a" style="left:97px;top:455px;" width="22" height="22" viewBox="0 0 22 22"><defs><linearGradient id="lyg" x1="0" x2="1" y1="0" y2="1"><stop offset="0" stop-color="#d8ecfa"/><stop offset="1" stop-color="#7fb0dc"/></linearGradient></defs><rect x="1.5" y="1.5" width="4.5" height="4.5" rx="1" fill="url(#lyg)" stroke="#4a6a90" stroke-width="1"/><rect x="1.5" y="8.0" width="4.5" height="4.5" rx="1" fill="url(#lyg)" stroke="#4a6a90" stroke-width="1"/><rect x="1.5" y="14.5" width="4.5" height="4.5" rx="1" fill="url(#lyg)" stroke="#4a6a90" stroke-width="1"/><rect x="8.0" y="1.5" width="4.5" height="4.5" rx="1" fill="url(#lyg)" stroke="#4a6a90" stroke-width="1"/><rect x="8.0" y="8.0" width="4.5" height="4.5" rx="1" fill="url(#lyg)" stroke="#4a6a90" stroke-width="1"/><rect x="8.0" y="14.5" width="4.5" height="4.5" rx="1" fill="url(#lyg)" stroke="#4a6a90" stroke-width="1"/><rect x="14.5" y="1.5" width="4.5" height="4.5" rx="1" fill="url(#lyg)" stroke="#4a6a90" stroke-width="1"/><rect x="14.5" y="8.0" width="4.5" height="4.5" rx="1" fill="url(#lyg)" stroke="#4a6a90" stroke-width="1"/><rect x="14.5" y="14.5" width="4.5" height="4.5" rx="1" fill="url(#lyg)" stroke="#4a6a90" stroke-width="1"/></svg>
<div class="t " style="left:125px;top:458.0px;font-size:12.5px;line-height:16px;">Grid Layout</div>
<svg class="a" style="left:97px;top:479px;" width="22" height="22" viewBox="0 0 22 22"><defs><linearGradient id="lyg" x1="0" x2="1" y1="0" y2="1"><stop offset="0" stop-color="#d8ecfa"/><stop offset="1" stop-color="#7fb0dc"/></linearGradient></defs><rect x="4.5" y="1.5" width="4.5" height="4.5" rx="1" fill="url(#lyg)" stroke="#4a6a90" stroke-width="1"/><rect x="4.5" y="8.0" width="4.5" height="4.5" rx="1" fill="url(#lyg)" stroke="#4a6a90" stroke-width="1"/><rect x="4.5" y="14.5" width="4.5" height="4.5" rx="1" fill="url(#lyg)" stroke="#4a6a90" stroke-width="1"/><rect x="11.0" y="1.5" width="4.5" height="4.5" rx="1" fill="url(#lyg)" stroke="#4a6a90" stroke-width="1"/><rect x="11.0" y="8.0" width="4.5" height="4.5" rx="1" fill="url(#lyg)" stroke="#4a6a90" stroke-width="1"/><rect x="11.0" y="14.5" width="4.5" height="4.5" rx="1" fill="url(#lyg)" stroke="#4a6a90" stroke-width="1"/></svg>
<div class="t " style="left:125px;top:482.0px;font-size:12.5px;line-height:16px;">Form Layout</div>
<div class="a" style="left:93px;top:502px;width:272px;height:19px;background:linear-gradient(#e2e2e2,#cfcfcf);border-top:1px solid #b4b4b4;border-bottom:1px solid #a8a8a8"></div>
<svg class="a" style="left:99px;top:508px;" width="11" height="7" viewBox="0 0 11 7"><path d="M0 0.5 H11 L5.5 6 Z" fill="#222"/></svg>
<div class="t" style="left:105.0px;width:260px;text-align:center;top:504.0px;font-size:12.5px;line-height:16px;">Spacers</div>
<svg class="a" style="left:98px;top:527px;" width="21" height="14" viewBox="0 0 21 14"><defs><linearGradient id="capg" x1="0" x2="1"><stop offset="0" stop-color="#333"/><stop offset=".5" stop-color="#888"/><stop offset="1" stop-color="#222"/></linearGradient></defs><rect x="0.5" y="0.5" width="3.5" height="12.5" fill="url(#capg)" stroke="#111" stroke-width=".8"/><rect x="16.5" y="0.5" width="3.5" height="12.5" fill="url(#capg)" stroke="#111" stroke-width=".8"/><path d="M4 12 L8 2 M8 12 L12 2 M12 12 L16 2" stroke="#111" stroke-width="2.6"/><path d="M4 12 L8 2 M8 12 L12 2 M12 12 L16 2" stroke="#6ab0d8" stroke-width="1.1"/><path d="M4 2 H16 M4 12 H16" stroke="#111" stroke-width="1.4" stroke-dasharray="1.5 2.5"/></svg>
<div class="t " style="left:125px;top:526.0px;font-size:12.5px;line-height:16px;">Horizontal Spacer</div>
<svg class="a" style="left:100px;top:548px;" width="14" height="21" viewBox="0 0 14 21"><defs><linearGradient id="capv" x1="0" x2="0" y1="0" y2="1"><stop offset="0" stop-color="#333"/><stop offset=".5" stop-color="#888"/><stop offset="1" stop-color="#222"/></linearGradient></defs><rect x="0.5" y="0.5" width="12.5" height="3.5" fill="url(#capv)" stroke="#111" stroke-width=".8"/><rect x="0.5" y="16.5" width="12.5" height="3.5" fill="url(#capv)" stroke="#111" stroke-width=".8"/><path d="M2 4 L12 8 M2 8 L12 12 M2 12 L12 16" stroke="#111" stroke-width="2.6"/><path d="M2 4 L12 8 M2 8 L12 12 M2 12 L12 16" stroke="#6ab0d8" stroke-width="1.1"/></svg>
<div class="t " style="left:125px;top:550.0px;font-size:12.5px;line-height:16px;">Vertical Spacer</div>
<div class="a" style="left:93px;top:570px;width:272px;height:19px;background:linear-gradient(#e2e2e2,#cfcfcf);border-top:1px solid #b4b4b4;border-bottom:1px solid #a8a8a8"></div>
<svg class="a" style="left:99px;top:576px;" width="11" height="7" viewBox="0 0 11 7"><path d="M0 0.5 H11 L5.5 6 Z" fill="#222"/></svg>
<div class="t" style="left:105.0px;width:260px;text-align:center;top:572.0px;font-size:12.5px;line-height:16px;">Buttons</div>
<svg class="a" style="left:97px;top:591px;" width="22" height="22" viewBox="0 0 22 22"><defs><linearGradient id="pbg" x1="0" x2="0" y1="0" y2="1"><stop offset="0" stop-color="#fafafa"/><stop offset="1" stop-color="#c8c8c8"/></linearGradient></defs><rect x="2.5" y="2.5" width="18" height="18" rx="2" fill="rgba(0,0,0,.3)"/><rect x="1.5" y="1.5" width="18" height="17.5" rx="2" fill="url(#pbg)" stroke="#333" stroke-width="1.1"/><text x="4" y="12.5" font-family="Liberation Sans" font-weight="bold" font-size="7.5" fill="#111">OK</text></svg>
<div class="t " style="left:125px;top:594.0px;font-size:12.5px;line-height:16px;">Push Button</div>
<svg class="a" style="left:97px;top:615px;" width="22" height="22" viewBox="0 0 22 22"><defs><linearGradient id="tbg" x1="0" x2="0" y1="0" y2="1"><stop offset="0" stop-color="#f4f4f4"/><stop offset="1" stop-color="#bcbcbc"/></linearGradient></defs><rect x="2.5" y="2.5" width="18" height="18" rx="2" fill="rgba(0,0,0,.3)"/><rect x="1.5" y="1.5" width="18" height="18" rx="2" fill="url(#tbg)" stroke="#333" stroke-width="1.1"/><path d="M5 8 A4.5 4.5 0 0 1 11 3.5 L9 6.5 L11 8.5 L14 6.5 A4.5 4.5 0 0 1 10.5 12.5 L16 18 L14 19.5 L8.5 13.5 A4.5 4.5 0 0 1 5 8 Z" fill="#888" stroke="#333" stroke-width="1"/></svg>
<div class="t " style="left:125px;top:618.0px;font-size:12.5px;line-height:16px;">Tool Button</div>
<svg class="a" style="left:97px;top:639px;" width="22" height="22" viewBox="0 0 22 22"><defs><radialGradient id="rbg" cx=".4" cy=".35" r=".7"><stop offset="0" stop-color="#fafafa"/><stop offset="1" stop-color="#9a9a9a"/></radialGradient></defs><circle cx="11" cy="11" r="7" fill="rgba(0,0,0,.25)"/><circle cx="10.5" cy="10.5" r="6.8" fill="url(#rbg)" stroke="#333" stroke-width="1.1"/><circle cx="10.5" cy="10.5" r="2.8" fill="#000"/></svg>
<div class="t " style="left:125px;top:642.0px;font-size:12.5px;line-height:16px;">Radio Button</div>
<svg class="a" style="left:97px;top:663px;" width="22" height="22" viewBox="0 0 22 22"><rect x="3" y="7" width="13" height="13" fill="rgba(0,0,0,.25)"/><rect x="2" y="6" width="13" height="13" fill="#8a8a8a" stroke="#222" stroke-width="1.1"/><path d="M4.5 12.5 L8.5 16.5 L19 4" fill="none" stroke="#7a0000" stroke-width="4"/><path d="M4.5 12.5 L8.5 16.5 L19 4" fill="none" stroke="#e81818" stroke-width="2.6"/></svg>
<div class="t " style="left:125px;top:666.0px;font-size:12.5px;line-height:16px;">Check Box</div>
<svg class="a" style="left:97px;top:687px;" width="22" height="22" viewBox="0 0 22 22"><defs><radialGradient id="clg" cx=".4" cy=".3" r=".8"><stop offset="0" stop-color="#b8e040"/><stop offset="1" stop-color="#4a7a08"/></radialGradient></defs><circle cx="11" cy="11" r="9.5" fill="url(#clg)" stroke="#2e4a04" stroke-width="1"/><path d="M5.5 11 H15 M11 6.5 L15.5 11 L11 15.5" fill="none" stroke="#fff" stroke-width="2.2"/></svg>
<div class="t " style="left:125px;top:690.0px;font-size:12.5px;line-height:16px;">Command Link Button</div>
<svg class="a" style="left:96px;top:710px;" width="24" height="24" viewBox="0 0 24 24"><defs><linearGradient id="dbg" x1="0" x2="1" y1="0" y2="1"><stop offset="0" stop-color="#fafafa"/><stop offset="1" stop-color="#d0d0d0"/></linearGradient></defs><rect x="1.5" y="1.5" width="21" height="21" fill="url(#dbg)" stroke="#777" stroke-width="1"/><path d="M3.5 9 L6.5 12.5 L12 3.5" fill="none" stroke="#38b038" stroke-width="2.4"/><path d="M10 12 L19 21 M19 12 L10 21" stroke="#d01010" stroke-width="2.6"/></svg>
<div class="t " style="left:125px;top:714.0px;font-size:12.5px;line-height:16px;">Dialog Button Box</div>
<div class="a" style="left:93px;top:734px;width:272px;height:19px;background:linear-gradient(#e2e2e2,#cfcfcf);border-top:1px solid #b4b4b4;border-bottom:1px solid #a8a8a8"></div>
<svg class="a" style="left:99px;top:740px;" width="11" height="7" viewBox="0 0 11 7"><path d="M0 0.5 H11 L5.5 6 Z" fill="#222"/></svg>
<div class="t" style="left:105.0px;width:260px;text-align:center;top:736.0px;font-size:12.5px;line-height:16px;">Item Views (Model-Based)</div>
<svg class="a" style="left:97px;top:755px;" width="22" height="22" viewBox="0 0 22 22"><defs><linearGradient id="lvg" x1="0" x2="1"><stop offset="0" stop-color="#f0f0f0"/><stop offset="1" stop-color="#a8a8a8"/></linearGradient></defs><rect x="2.5" y="2.5" width="18" height="19" fill="rgba(0,0,0,.2)"/><rect x="1.5" y="1.5" width="18" height="19" rx="1" fill="url(#lvg)" stroke="#555" stroke-width="1.2"/><path d="M4 4.5 H17" stroke="#777" stroke-width=".9"/><path d="M4 6.7 H17" stroke="#777" stroke-width=".9"/><path d="M4 8.9 H17" stroke="#777" stroke-width=".9"/><path d="M4 11.100000000000001 H17" stroke="#777" stroke-width=".9"/><path d="M4 13.3 H17" stroke="#777" stroke-width=".9"/><path d="M4 15.5 H17" stroke="#777" stroke-width=".9"/><path d="M4 17.700000000000003 H17" stroke="#777" stroke-width=".9"/></svg>
<div class="t " style="left:125px;top:758.0px;font-size:12.5px;line-height:16px;">List View</div>
<svg class="a" style="left:95px;top:779px;" width="24" height="22" viewBox="0 0 24 22"><path d="M1 4 L6 1.5 L8.5 5 L3.5 7.5 Z" fill="#2f8a2f" stroke="#111" stroke-width=".8"/><path d="M8 6 V17 H13 M8 11 H13" fill="none" stroke="#333" stroke-dasharray="1 1"/><path d="M14 2.5 H18 L20.5 5 V10 H14 Z" fill="#fff" stroke="#444" stroke-width="1"/><path d="M14 12.5 H18 L20.5 15 V20 H14 Z" fill="#fff" stroke="#444" stroke-width="1"/></svg>
<div class="t " style="left:125px;top:782.0px;font-size:12.5px;line-height:16px;">Tree View</div>
<svg class="a" style="left:97px;top:803px;" width="22" height="22" viewBox="0 0 22 22"><defs><linearGradient id="tvg" x1="0" x2="1"><stop offset="0" stop-color="#f4f4f4"/><stop offset="1" stop-color="#c4c4c4"/></linearGradient></defs><rect x="2.5" y="2.5" width="18" height="18" fill="rgba(0,0,0,.2)"/><rect x="1.5" y="1.5" width="18" height="18" rx="2" fill="url(#tvg)" stroke="#444" stroke-width="1.2"/><path d="M1.5 6 H19.5 M1.5 10 H19.5 M1.5 14 H19.5 M7 1.5 V19.5" stroke="#444" stroke-width="1"/></svg>
<div class="t " style="left:125px;top:806.0px;font-size:12.5px;line-height:16px;">Table View</div>
<svg class="a" style="left:97px;top:827px;" width="22" height="22" viewBox="0 0 22 22"><rect x="2.5" y="4.5" width="18" height="14" fill="rgba(0,0,0,.2)"/><rect x="1.5" y="3.5" width="18" height="14" rx="2" fill="#fff" stroke="#444" stroke-width="1.3"/><path d="M7.5 3.5 V17.5 M13.5 3.5 V17.5" stroke="#444" stroke-width="1.3"/></svg>
<div class="t " style="left:125px;top:830.0px;font-size:12.5px;line-height:16px;">Column View</div>
<div class="a" style="left:93px;top:850px;width:272px;height:19px;background:linear-gradient(#e2e2e2,#cfcfcf);border-top:1px solid #b4b4b4;border-bottom:1px solid #a8a8a8"></div>
<svg class="a" style="left:99px;top:856px;" width="11" height="7" viewBox="0 0 11 7"><path d="M0 0.5 H11 L5.5 6 Z" fill="#222"/></svg>
<div class="t" style="left:105.0px;width:260px;text-align:center;top:852.0px;font-size:12.5px;line-height:16px;">Item Widgets (Item-Based)</div>
<svg class="a" style="left:97px;top:871px;" width="22" height="22" viewBox="0 0 22 22"><defs><linearGradient id="lvg" x1="0" x2="1"><stop offset="0" stop-color="#f0f0f0"/><stop offset="1" stop-color="#a8a8a8"/></linearGradient></defs><rect x="2.5" y="2.5" width="18" height="19" fill="rgba(0,0,0,.2)"/><rect x="1.5" y="1.5" width="18" height="19" rx="1" fill="url(#lvg)" stroke="#555" stroke-width="1.2"/><path d="M4 4.5 H17" stroke="#777" stroke-width=".9"/><path d="M4 6.7 H17" stroke="#777" stroke-width=".9"/><path d="M4 8.9 H17" stroke="#777" stroke-width=".9"/><path d="M4 11.100000000000001 H17" stroke="#777" stroke-width=".9"/><path d="M4 13.3 H17" stroke="#777" stroke-width=".9"/><path d="M4 15.5 H17" stroke="#777" stroke-width=".9"/><path d="M4 17.700000000000003 H17" stroke="#777" stroke-width=".9"/></svg>
<div class="t " style="left:125px;top:874.0px;font-size:12.5px;line-height:16px;">List Widget</div>
<svg class="a" style="left:95px;top:895px;" width="24" height="22" viewBox="0 0 24 22"><path d="M1 4 L6 1.5 L8.5 5 L3.5 7.5 Z" fill="#2f8a2f" stroke="#111" stroke-width=".8"/><path d="M8 6 V17 H13 M8 11 H13" fill="none" stroke="#333" stroke-dasharray="1 1"/><path d="M14 2.5 H18 L20.5 5 V10 H14 Z" fill="#fff" stroke="#444" stroke-width="1"/><path d="M14 12.5 H18 L20.5 15 V20 H14 Z" fill="#fff" stroke="#444" stroke-width="1"/></svg>
<div class="t " style="left:125px;top:898.0px;font-size:12.5px;line-height:16px;">Tree Widget</div>
<svg class="a" style="left:97px;top:919px;" width="22" height="22" viewBox="0 0 22 22"><defs><linearGradient id="tvg" x1="0" x2="1"><stop offset="0" stop-color="#f4f4f4"/><stop offset="1" stop-color="#c4c4c4"/></linearGradient></defs><rect x="2.5" y="2.5" width="18" height="18" fill="rgba(0,0,0,.2)"/><rect x="1.5" y="1.5" width="18" height="18" rx="2" fill="url(#tvg)" stroke="#444" stroke-width="1.2"/><path d="M1.5 6 H19.5 M1.5 10 H19.5 M1.5 14 H19.5 M7 1.5 V19.5" stroke="#444" stroke-width="1"/></svg>
<div class="t " style="left:125px;top:922.0px;font-size:12.5px;line-height:16px;">Table Widget</div>
<div class="a" style="left:93px;top:942px;width:272px;height:19px;background:linear-gradient(#e2e2e2,#cfcfcf);border-top:1px solid #b4b4b4;border-bottom:1px solid #a8a8a8"></div>
<svg class="a" style="left:99px;top:948px;" width="11" height="7" viewBox="0 0 11 7"><path d="M0 0.5 H11 L5.5 6 Z" fill="#222"/></svg>
<div class="t" style="left:105.0px;width:260px;text-align:center;top:944.0px;font-size:12.5px;line-height:16px;">Containers</div>
<svg class="a" style="left:97px;top:963px;" width="22" height="22" viewBox="0 0 22 22"><defs><linearGradient id="gbg" x1="0" x2="0" y1="0" y2="1"><stop offset="0" stop-color="#fafafa"/><stop offset="1" stop-color="#cfcfcf"/></linearGradient></defs><rect x="2" y="4.5" width="18" height="15" rx="2.5" fill="rgba(0,0,0,.25)"/><rect x="1.5" y="3.5" width="17" height="15" rx="2.5" fill="url(#gbg)" stroke="#555" stroke-width="1.2"/><rect x="4" y="1" width="11" height="4.5" fill="#111"/></svg>
<div class="t " style="left:125px;top:966.0px;font-size:12.5px;line-height:16px;">Group Box</div>
<svg class="a" style="left:97px;top:987px;" width="22" height="22" viewBox="0 0 22 22"><rect x="1.5" y="1.5" width="18" height="19" rx="2" fill="#ececec" stroke="#444" stroke-width="1.2"/><rect x="4" y="4" width="10" height="14" fill="#fff" stroke="#999" stroke-width=".8"/><rect x="15.2" y="7" width="2.6" height="8" fill="#8cc63f"/><path d="M15 5.5 L16.5 3.5 L18 5.5 M15 16.5 L16.5 18.5 L18 16.5" fill="#222"/></svg>
<div class="t " style="left:125px;top:990.0px;font-size:12.5px;line-height:16px;">Scroll Area</div>
<svg class="a" style="left:98px;top:1013px;" width="20" height="18" viewBox="0 0 20 18"><path d="M1.5 16 V1.5 H8 L10 4 H18.5 V16" fill="#ddd" stroke="#555" stroke-width="1.3"/><path d="M1.5 5 H18.5" stroke="#555" stroke-width="1"/></svg>
<div class="a" style="left:92px;top:1017px;width:287px;height:24px;background:#d6d6d6;border-top:1px solid #a0a0a0"></div>
<div class="a" style="left:385px;top:329px;width:624px;height:689px;background:#d6d6d6;border-left:2px solid #8a8a8a;border-top:1px solid #8a8a8a;border-right:1px solid #8e8e8e;border-bottom:1px solid #8e8e8e"></div>
<div class="a" style="left:387px;top:330px;width:1px;height:672px;background:#fff"></div>
<div class="a grid" style="left:388px;top:330px;width:606px;height:646px;background-position:2px 1px"></div>
<div class="a" style="left:399px;top:330px;width:3px;height:580px;background:#ee6e6e"></div>
<div class="a" style="left:402px;top:330px;width:2px;height:580px;background:#111"></div>
<div class="a" style="left:413px;top:330px;width:1px;height:312px;background:#ee6e6e"></div>
<div class="a" style="left:414px;top:330px;width:580px;height:311px;background:#000"></div>
<div class="a" style="left:416px;top:340px;width:578px;height:1px;background:repeating-linear-gradient(90deg,#e00 0 1.2px,transparent 1.2px 4px)"></div>
<svg class="a" style="left:756px;top:330px;" width="26" height="34" viewBox="0 0 26 34"><defs><linearGradient id="cone" x1="0" x2="1"><stop offset="0" stop-color="#666"/><stop offset=".55" stop-color="#fafafa"/><stop offset="1" stop-color="#999"/></linearGradient></defs><circle cx="12.7" cy="22.4" r="8.4" fill="none" stroke="#10e8e8" stroke-width="1.1"/><path d="M4 22.4 H21.4 M12.7 22.4 V31 M4.5 14.2 L20.9 30.6 M20.9 14.2 L4.5 30.6" stroke="#10e8e8" stroke-width="1"/><path d="M3.9 0 H22.2 L12.7 21.7 Z" fill="url(#cone)"/></svg>
<svg class="a" style="left:760px;top:375px;" width="18" height="23" viewBox="0 0 18 23"><path d="M2 1.5 H15.5 L2.5 21.5 H16" fill="none" stroke="#3a3aff" stroke-width="1.1"/></svg>
<div class="a" style="left:768px;top:418px;width:1px;height:104px;background:#3b3bff"></div>
<div class="a" style="left:768px;top:522px;width:106px;height:1px;background:#2ce62c"></div>
<svg class="a" style="left:886px;top:512px;" width="18" height="22" viewBox="0 0 18 22"><path d="M2.5 1 L15.5 21 M15.5 1 L2.5 21" stroke="#2ce62c" stroke-width="1"/></svg>
<div class="a" style="left:414px;top:641px;width:580px;height:1px;background:#ee6e6e"></div>
<div class="a" style="left:404px;top:651px;width:590px;height:2px;background:#111"></div>
<div class="a" style="left:404px;top:653px;width:590px;height:3px;background:#ee6e6e"></div>
<div class="a" style="left:404px;top:662px;width:590px;height:1px;background:#ee6e6e"></div>
<div class="a" style="left:404px;top:663px;width:590px;height:2px;background:#111"></div>
<div class="a" style="left:404px;top:674px;width:590px;height:1px;background:#ee6e6e"></div>
<div class="a" style="left:790px;top:686px;width:158px;height:1px;border-top:1px dotted #a0a0a0"></div>
<div class="a" style="left:947px;top:686px;width:1px;height:56px;border-left:1px dotted #a0a0a0"></div>
<div class="t " style="left:805.5px;top:694.0px;font-size:13px;line-height:16px;color:#2e2e2e;transform:scaleX(0.853);transform-origin:0 50%">SPINDLE OVERRIDE</div>
<div class="a" style="left:790px;top:717px;width:158px;height:26px;border:1px solid #ee6e6e;border-left:none;border-top-color:#ee6e6e"></div>
<div class="a" style="left:774px;top:720px;width:47px;height:23px;background:linear-gradient(#f6f6f6,#dedede);border:1px solid #a9a9a9;border-radius:3px"></div>
<div class="t" style="left:774.0px;width:47px;text-align:center;top:724.5px;font-size:12.5px;line-height:16px;">80</div>
<div class="a" style="left:837px;top:720px;width:46px;height:23px;background:linear-gradient(#f6f6f6,#dedede);border:1px solid #a9a9a9;border-radius:3px"></div>
<div class="t" style="left:837.0px;width:46px;text-align:center;top:724.5px;font-size:12.5px;line-height:16px;">100</div>
<div class="a" style="left:899px;top:720px;width:46px;height:23px;background:linear-gradient(#f6f6f6,#dedede);border:1px solid #a9a9a9;border-radius:3px"></div>
<div class="t" style="left:899.0px;width:46px;text-align:center;top:724.5px;font-size:12.5px;line-height:16px;">120</div>
<div class="a" style="left:954px;top:686px;width:40px;height:55px;border:1px solid #ee6e6e;border-right:none"></div>
<div class="t " style="left:968px;top:705.0px;font-size:16.5px;line-height:20px;color:#2e2e2e;width:26px;overflow:hidden">OVE</div>
<div class="a" style="left:954px;top:745px;width:40px;height:55px;border:1px solid #ee6e6e;border-right:none"></div>
<div class="t " style="left:968px;top:764.0px;font-size:16.5px;line-height:20px;color:#2e2e2e;width:26px;overflow:hidden">REC</div>
<div class="a" style="left:790px;top:763px;width:158px;height:21px;background:#ececec;border:1px solid #aaa;border-radius:3px"></div>
<div class="a" style="left:790px;top:764px;width:77px;height:19px;background:linear-gradient(#a8a8ff,#5a5ae8)"></div>
<div class="a" style="left:866px;top:751px;width:42px;height:46px;background:#3a3a3a;border:1px solid #222;border-radius:5px"></div>
<div class="a" style="left:876px;top:753px;width:2px;height:42px;background:#e8e8e8"></div>
<div class="a" style="left:886px;top:753px;width:2px;height:42px;background:#e8e8e8"></div>
<div class="a" style="left:896px;top:753px;width:2px;height:42px;background:#e8e8e8"></div>
<div class="a" style="left:404px;top:809px;width:590px;height:1px;background:#b0b0b0"></div>
<div class="a" style="left:404px;top:811px;width:590px;height:1px;background:#ee6e6e"></div>
<div class="a" style="left:404px;top:822px;width:590px;height:2px;background:#111"></div>
<div class="a" style="left:404px;top:824px;width:590px;height:1px;background:#ee6e6e"></div>
<div class="a" style="left:404px;top:830px;width:590px;height:2px;background:#111"></div>
<div class="a" style="left:790px;top:853px;width:42px;height:36px;background:linear-gradient(#f8f8f8,#dcdcdc);border:1px solid #aaa;border-radius:3px"></div>
<div class="t " style="left:797px;top:864.0px;font-size:12.5px;line-height:16px;">ort</div>
<div class="a" style="left:840px;top:841px;width:154px;height:60px;border:1px solid #ee6e6e;border-right:none"></div>
<div class="a" style="left:841px;top:861px;width:153px;height:25px;background:linear-gradient(#e0e0e0,#f8f8f8 60%,#ececec);border:1px solid #a9a9a9;border-right:none"></div>
<div class="a" style="left:842px;top:862px;width:3px;height:23px;background:#8fbf6f;border:1px solid #6b9a4b"></div>
<div class="t " style="left:895.7px;top:866.0px;font-size:13px;line-height:16px;color:#2e2e2e;transform:scaleX(0.825);transform-origin:0 50%">PROGRESS 0%</div>
<div class="a" style="left:399px;top:910px;width:595px;height:2px;background:#111"></div>
<div class="a" style="left:399px;top:918px;width:595px;height:1px;background:#ee6e6e"></div>
<div class="a" style="left:399px;top:967px;width:595px;height:1px;background:#ee6e6e"></div>
<svg class="a" style="left:400px;top:919px;" width="48" height="48" viewBox="0 0 48 48"><rect x="0" y="0" width="48" height="48" fill="#a9a9a9"/><circle cx="14.7" cy="23.3" r="9.3" fill="#b8b8b8" stroke="#444" stroke-width="0.8"/><path d="M14.7 23.3 V14 A9.3 9.3 0 0 1 24 23.3 Z M14.7 23.3 V32.6 A9.3 9.3 0 0 1 5.4 23.3 Z" fill="#000"/><path d="M14.7 10 V14 M2 23.3 H5.4" stroke="#333" stroke-width="1"/><path d="M22.5 14 L30.5 6.5" stroke="#000" stroke-width="2.2"/><path d="M33.5 3.8 L26.8 5.8 L31.5 10.5 Z" fill="#000"/><path d="M23 32 L31.5 39.5" stroke="#000" stroke-width="2.2"/><path d="M35 42.5 L28.5 41.5 L33.5 36 Z" fill="#000"/><circle cx="24" cy="24.5" r="22.3" fill="none" stroke="#f00" stroke-width="3"/><path d="M8.3 39.7 L39.6 8" stroke="#f00" stroke-width="3"/><text x="29" y="34.5" font-family="Liberation Sans" font-weight="bold" font-size="22" fill="#ffef00" stroke="#000" stroke-width="1.6" paint-order="stroke">Z</text></svg>
<svg class="a" style="left:454px;top:919px;" width="48" height="48" viewBox="0 0 48 48"><rect x="0" y="0" width="48" height="48" fill="#a9a9a9"/><circle cx="14.7" cy="23.3" r="9.3" fill="#b8b8b8" stroke="#444" stroke-width="0.8"/><path d="M14.7 23.3 V14 A9.3 9.3 0 0 1 24 23.3 Z M14.7 23.3 V32.6 A9.3 9.3 0 0 1 5.4 23.3 Z" fill="#000"/><path d="M14.7 10 V14 M2 23.3 H5.4" stroke="#333" stroke-width="1"/><path d="M22.5 14 L30.5 6.5" stroke="#000" stroke-width="2.2"/><path d="M33.5 3.8 L26.8 5.8 L31.5 10.5 Z" fill="#000"/><path d="M23 32 L31.5 39.5" stroke="#000" stroke-width="2.2"/><path d="M35 42.5 L28.5 41.5 L33.5 36 Z" fill="#000"/><circle cx="24" cy="24.5" r="22.3" fill="none" stroke="#f00" stroke-width="3"/><path d="M8.3 39.7 L39.6 8" stroke="#f00" stroke-width="3"/><text x="26" y="34.5" font-family="Liberation Sans" font-weight="bold" font-size="22" fill="#ffef00" stroke="#000" stroke-width="1.6" paint-order="stroke">X</text></svg>
<div class="a" style="left:397px;top:916px;width:7px;height:7px;background:#c8c8c8;border:1.5px solid #0000f0"></div>
<div class="a" style="left:421px;top:916px;width:7px;height:7px;background:#c8c8c8;border:1.5px solid #0000f0"></div>
<div class="a" style="left:445px;top:916px;width:7px;height:7px;background:#c8c8c8;border:1.5px solid #0000f0"></div>
<div class="a" style="left:397px;top:940px;width:7px;height:7px;background:#c8c8c8;border:1.5px solid #0000f0"></div>
<div class="a" style="left:445px;top:940px;width:7px;height:7px;background:#c8c8c8;border:1.5px solid #0000f0"></div>
<div class="a" style="left:397px;top:964px;width:7px;height:7px;background:#c8c8c8;border:1.5px solid #0000f0"></div>
<div class="a" style="left:421px;top:964px;width:7px;height:7px;background:#c8c8c8;border:1.5px solid #0000f0"></div>
<div class="a" style="left:445px;top:964px;width:7px;height:7px;background:#c8c8c8;border:1.5px solid #0000f0"></div>
<div class="a" style="left:681px;top:933px;width:1.5px;height:21px;background:#00f"></div>
<svg class="a" style="left:683px;top:939px;" width="311" height="8" viewBox="0 0 311 8"><defs><pattern id="zz" width="3" height="8" patternUnits="userSpaceOnUse"><rect width="3" height="8" fill="#f6f6ea"/><path d="M0.3 6.6 L1 4 L1.3 2 L2.6 1" fill="none" stroke="#0000f0" stroke-width="0.9"/></pattern></defs><rect x="0" y="0.5" width="311" height="7" fill="url(#zz)"/></svg>
<div class="a" style="left:994px;top:330px;width:14px;height:672px;background:linear-gradient(90deg,#dcdcdc,#e6e6e6 70%,#f6f6f6);border-left:1px solid #9a9a9a"></div>
<div class="a" style="left:995px;top:330px;width:13px;height:15px;background:#d6d6d6"></div>
<svg class="a" style="left:996px;top:332px;" width="11" height="9" viewBox="0 0 11 9"><path d="M1 7 H10 L5.5 2 Z" fill="#222"/></svg>
<div class="a" style="left:996px;top:507px;width:10px;height:481px;background:linear-gradient(90deg,#f2f2f2,#dedede);border:1px solid #8e8e8e;border-radius:5px"></div>
<div class="a" style="left:995px;top:989px;width:13px;height:13px;background:#d6d6d6"></div>
<svg class="a" style="left:996px;top:992px;" width="11" height="8" viewBox="0 0 11 8"><path d="M1 1 H10 L5.5 6 Z" fill="#8a8a8a" stroke="#8a8a8a" stroke-width="0.8" stroke-linejoin="round"/></svg>
<div class="a" style="left:388px;top:976px;width:606px;height:26px;background:#d6d6d6"></div>
<div class="a" style="left:993px;top:976px;width:1px;height:13px;background:#9a9a9a"></div>
<div class="a" style="left:388px;top:1002px;width:606px;height:15px;background:linear-gradient(#e2e2e2,#f8f8f8);border-top:1px solid #8a8a8a"></div>
<div class="a" style="left:980px;top:1003px;width:14px;height:14px;background:#d6d6d6"></div>
<svg class="a" style="left:390px;top:1005px;" width="8" height="10" viewBox="0 0 8 10"><path d="M6 1 V9 L1.5 5 Z" fill="#aaa"/></svg>
<div class="a" style="left:401px;top:1003px;width:343px;height:13px;background:linear-gradient(#f4f4f4,#e0e0e0);border:1px solid #9a9a9a;border-radius:6px"></div>
<svg class="a" style="left:983px;top:1005px;" width="9" height="10" viewBox="0 0 9 10"><path d="M2 1.5 L7 5 L2 8.5 Z" fill="#1a1a1a" stroke="#1a1a1a" stroke-width="1.8" stroke-linejoin="round"/></svg>
<div class="a" style="left:994px;top:1002px;width:14px;height:15px;background:#d6d6d6"></div>
<div class="a" style="left:398px;top:582px;width:401px;height:325px;background:linear-gradient(#e6e6e6,#d6d6d6 60px,#d6d6d6);border-radius:5px 5px 0 0;box-shadow:0 2px 9px 2px rgba(0,0,0,.45);border-top:1px solid #fafafa"></div>
<div class="t" style="left:449.0px;width:300px;text-align:center;top:589.0px;font-size:13px;line-height:16px;color:#7a7a7a;font-weight:bold;font-size:13.3px">Dialog — Qt Designer</div>
<svg class="a" style="left:775px;top:590px;" width="11" height="11" viewBox="0 0 11 11"><path d="M2 2 L9 9 M9 2 L2 9" stroke="#8a8a8a" stroke-width="2.2"/></svg>
<div class="t " style="left:407px;top:618.5px;font-size:12.5px;line-height:16px;color:#2e2e2e;font-weight:bold;">StringList</div>
<div class="a" style="left:424px;top:641px;width:320px;height:140px;background:#f2f2f2;border:1px solid #9a9a9a"></div>
<div class="t " style="left:428px;top:644.0px;font-size:12.7px;line-height:16px;">:/images/images/ref_z_not.png</div>
<div class="t " style="left:428px;top:663.0px;font-size:12.7px;line-height:16px;">:/images/images/clear.png</div>
<div class="a" style="left:751px;top:675px;width:28px;height:32px;background:#d8d8d8;border:1px solid #bdbdbd;border-radius:3px"></div>
<svg class="a" style="left:755px;top:681px;" width="20" height="20" viewBox="0 0 20 20"><path d="M10 2 L17 9 H14 V16 H6 V9 H3 Z" fill="#b4b4b4" stroke="#6a6a6a" stroke-width="1.1" stroke-linejoin="round"/></svg>
<div class="a" style="left:751px;top:715px;width:28px;height:32px;background:#d8d8d8;border:1px solid #bdbdbd;border-radius:3px"></div>
<svg class="a" style="left:755px;top:721px;" width="20" height="20" viewBox="0 0 20 20"><path d="M10 18 L17 11 H14 V4 H6 V11 H3 Z" fill="#b4b4b4" stroke="#6a6a6a" stroke-width="1.1" stroke-linejoin="round"/></svg>
<div class="a" style="left:425px;top:788px;width:65px;height:31px;background:linear-gradient(#f4f4f4,#dcdcdc);border:1px solid #a5a5a5;border-radius:3px;"></div>
<svg class="a" style="left:429px;top:792px;" width="24" height="24" viewBox="0 0 24 24"><defs><linearGradient id="ng" x1="0" x2="0" y1="0" y2="1"><stop offset="0" stop-color="#9cf58a"/><stop offset=".5" stop-color="#2ed42a"/><stop offset="1" stop-color="#12b012"/></linearGradient></defs><path d="M9 1.5 H14 V9 H22 V14 H14 V22 H9 V14 H1.5 V9 H9 Z" fill="url(#ng)" stroke="#1a9a1a" stroke-width="1" stroke-linejoin="round"/></svg>
<div class="t " style="left:457px;top:796.5px;font-size:12.5px;line-height:16px;">New</div>
<div class="a" style="left:457px;top:811px;width:9px;height:1px;background:#2e2e2e"></div>
<div class="a" style="left:498px;top:788px;width:75px;height:31px;background:#d4d4d4;border:1px solid #bdbdbd;border-radius:3px"></div>
<div class="a" style="left:503px;top:800px;width:22px;height:6px;background:#e4e4e4;border:1px solid #9a9a9a;border-radius:1px"></div>
<div class="t " style="left:530px;top:796.5px;font-size:12.5px;line-height:16px;color:#8c8c8c;">Delete</div>
<div class="a" style="left:530px;top:811px;width:8px;height:1px;background:#8c8c8c"></div>
<div class="t " style="left:424px;top:832.5px;font-size:12.5px;line-height:16px;">Value:</div>
<div class="a" style="left:424px;top:847px;width:8px;height:1px;background:#2e2e2e"></div>
<div class="a" style="left:466px;top:828px;width:313px;height:25px;background:#d4d4d4;border:1px solid #a8a8a8;border-radius:3px"></div>
<div class="a" style="left:614px;top:873px;width:83px;height:24px;background:linear-gradient(#f4f4f4,#dcdcdc);border:1px solid #a5a5a5;border-radius:3px;"></div>
<div class="t" style="left:615.5px;width:80px;text-align:center;top:877.0px;font-size:12.5px;line-height:16px;">Cancel</div>
<div class="a" style="left:638px;top:891px;width:8px;height:1px;background:#2e2e2e"></div>
<div class="a" style="left:705px;top:873px;width:83px;height:24px;background:linear-gradient(#f4f4f4,#dcdcdc);border:1px solid #a5a5a5;border-radius:3px;border-color:#9db58a"></div>
<div class="t" style="left:706.5px;width:80px;text-align:center;top:877.0px;font-size:12.5px;line-height:16px;">OK</div>
<div class="a" style="left:738px;top:891px;width:9px;height:1px;background:#2e2e2e"></div>
<div class="t " style="left:1017px;top:333.5px;font-size:12.5px;line-height:16px;">Object Inspector</div>
<svg class="a" style="left:1603px;top:336px;" width="29" height="12" viewBox="0 0 29 12"><rect x="0.5" y="0.5" width="10" height="10" rx="2" fill="none" stroke="#5a5a55" stroke-width="1"/><rect x="4.5" y="2.5" width="4" height="4" rx="1" fill="none" stroke="#5a5a55" stroke-width="1"/><rect x="2.5" y="4.5" width="4" height="4" rx="1" fill="#e8e8e8" stroke="#5a5a55" stroke-width="1"/><rect x="17.5" y="0.5" width="10" height="10" rx="2" fill="none" stroke="#5a5a55" stroke-width="1"/><path d="M20 3 L25 8 M25 3 L20 8" stroke="#5a5a55" stroke-width="1.7"/></svg>
<div class="a" style="left:1015px;top:354px;width:619px;height:87px;background:#f2f2f2;border:1px solid #9c9c9c"></div>
<div class="a hdr" style="left:1016px;top:355px;width:603px;height:24px;"></div>
<div class="a" style="left:1407px;top:356px;width:1px;height:23px;background:#b8b8b8"></div>
<div class="t " style="left:1019px;top:360.0px;font-size:12.5px;line-height:16px;">Object</div>
<div class="t " style="left:1412px;top:360.0px;font-size:12.5px;line-height:16px;">Class</div>
<div class="a" style="left:1016px;top:380px;width:603px;height:17px;background:#e4e4e4"></div>
<div class="t " style="left:1099px;top:380.5px;font-size:12.5px;line-height:16px;color:#2e2e2e;">hardLimit2Icon</div>
<svg class="a" style="left:1412px;top:384px;" width="16" height="10" viewBox="0 0 16 10"><path d="M2 9 C2 2 14 2 14 9 Z" fill="#f2c21c" stroke="#333" stroke-width="1"/><path d="M5 4 L8 1 L11 4" fill="none" stroke="#888" stroke-width="1.2"/><rect x="0.5" y="7.5" width="15" height="2.5" fill="#1a1a1a"/><path d="M3 8.7 H13" stroke="#3a8ad0" stroke-width=".8" stroke-dasharray="1 1"/></svg>
<div class="t " style="left:1433px;top:380.5px;font-size:12.5px;line-height:16px;color:#2e2e2e;">StatusImageSwitcher</div>
<div class="a" style="left:1016px;top:397px;width:603px;height:17px;background:#8fac6e"></div>
<div class="t " style="left:1099px;top:397.5px;font-size:12.5px;line-height:16px;color:#fff;">homeIcon</div>
<svg class="a" style="left:1412px;top:401px;" width="16" height="10" viewBox="0 0 16 10"><path d="M2 9 C2 2 14 2 14 9 Z" fill="#f2c21c" stroke="#333" stroke-width="1"/><path d="M5 4 L8 1 L11 4" fill="none" stroke="#888" stroke-width="1.2"/><rect x="0.5" y="7.5" width="15" height="2.5" fill="#1a1a1a"/><path d="M3 8.7 H13" stroke="#3a8ad0" stroke-width=".8" stroke-dasharray="1 1"/></svg>
<div class="t " style="left:1433px;top:397.5px;font-size:12.5px;line-height:16px;color:#fff;">StatusImageSwitcher</div>
<div class="a" style="left:1016px;top:414px;width:603px;height:17px;background:#e4e4e4"></div>
<div class="t " style="left:1099px;top:414.5px;font-size:12.5px;line-height:16px;color:#2e2e2e;">homeIcon_x</div>
<svg class="a" style="left:1412px;top:418px;" width="16" height="10" viewBox="0 0 16 10"><path d="M2 9 C2 2 14 2 14 9 Z" fill="#f2c21c" stroke="#333" stroke-width="1"/><path d="M5 4 L8 1 L11 4" fill="none" stroke="#888" stroke-width="1.2"/><rect x="0.5" y="7.5" width="15" height="2.5" fill="#1a1a1a"/><path d="M3 8.7 H13" stroke="#3a8ad0" stroke-width=".8" stroke-dasharray="1 1"/></svg>
<div class="t " style="left:1433px;top:414.5px;font-size:12.5px;line-height:16px;color:#2e2e2e;">StatusImageSwitcher</div>
<div class="a" style="left:1016px;top:431px;width:603px;height:9px;background:#f2f2f2"></div>
<div class="a" style="left:1016px;top:431px;width:603px;height:9px;overflow:hidden"><div class="t" style="left:83px;top:0.5px;font-size:12.5px;line-height:16px;color:#2e2e2e">horizontalSpacer_5</div><svg class="a" style="left:396px;top:2px" width="15" height="8" viewBox="0 0 15 8"><rect x="0.5" y="0.5" width="2.5" height="8" fill="#222"/><rect x="12" y="0.5" width="2.5" height="8" fill="#222"/><path d="M3 2 C5 7 7 2 8 7 C9 2 11 7 12 2" fill="none" stroke="#468" stroke-width="1.2"/></svg><div class="t" style="left:417px;top:0.5px;font-size:12.5px;line-height:16px;color:#2e2e2e">Spacer</div></div>
<div class="a" style="left:1619px;top:355px;width:14px;height:85px;background:#e2e2e2;border-left:1px solid #d0d0d0"></div>
<svg class="a" style="left:1620px;top:357px;" width="12" height="9" viewBox="0 0 12 9"><path d="M1 7 H11 L6 2 Z" fill="#222"/></svg>
<svg class="a" style="left:1620px;top:429px;" width="12" height="9" viewBox="0 0 12 9"><path d="M1 2 H11 L6 7 Z" fill="#222"/></svg>
<div class="a" style="left:1621px;top:389px;width:10px;height:32px;background:linear-gradient(90deg,#f6f6f6,#e0e0e0);border:1px solid #a8a8a8;border-radius:5px"></div>
<div class="t " style="left:1017px;top:451.5px;font-size:12.5px;line-height:16px;">Property Editor</div>
<svg class="a" style="left:1603px;top:454px;" width="29" height="12" viewBox="0 0 29 12"><rect x="0.5" y="0.5" width="10" height="10" rx="2" fill="none" stroke="#5a5a55" stroke-width="1"/><rect x="4.5" y="2.5" width="4" height="4" rx="1" fill="none" stroke="#5a5a55" stroke-width="1"/><rect x="2.5" y="4.5" width="4" height="4" rx="1" fill="#e8e8e8" stroke="#5a5a55" stroke-width="1"/><rect x="17.5" y="0.5" width="10" height="10" rx="2" fill="none" stroke="#5a5a55" stroke-width="1"/><path d="M20 3 L25 8 M25 3 L20 8" stroke="#5a5a55" stroke-width="1.7"/></svg>
<div class="a" style="left:1018px;top:479px;width:493px;height:25px;background:#f2f2f2;border:1px solid #a5a5a5;border-radius:3px"></div>
<div class="t " style="left:1023px;top:483.5px;font-size:12.5px;line-height:16px;color:#9a9a9a;">Filter</div>
<svg class="a" style="left:1517px;top:480px;" width="24" height="24" viewBox="0 0 24 24"><defs><linearGradient id="pg" x1="0" x2="0" y1="0" y2="1"><stop offset="0" stop-color="#8df07a"/><stop offset="1" stop-color="#12b812"/></linearGradient></defs><path d="M8.5 1.5 H14.5 V8.5 H21.5 V14.5 H14.5 V21.5 H8.5 V14.5 H1.5 V8.5 H8.5 Z" fill="url(#pg)" stroke="#1a9a1a" stroke-width="1"/></svg>
<svg class="a" style="left:1542px;top:491px;" width="8" height="6" viewBox="0 0 8 6"><path d="M0 0 H8 L4 5 Z" fill="#222"/></svg>
<div class="a" style="left:1561px;top:489px;width:22px;height:6px;background:linear-gradient(#f0f0f0,#cfcfcf);border:1px solid #999;border-radius:1px"></div>
<svg class="a" style="left:1595px;top:480px;" width="25" height="25" viewBox="0 0 25 25"><path d="M3 22 L15 10" stroke="#333" stroke-width="3.2" stroke-linecap="round"/><path d="M3.5 21.5 L14.5 10.5" stroke="#bbb" stroke-width="1" stroke-linecap="round"/><path d="M17.5 1.5 A5.5 5.5 0 1 0 23.5 7.5 L20 8 L17 5 Z" fill="#e2e2e2" stroke="#999" stroke-width="1"/><circle cx="17.5" cy="7.5" r="1.3" fill="#333"/></svg>
<svg class="a" style="left:1620px;top:491px;" width="8" height="6" viewBox="0 0 8 6"><path d="M0 0 H8 L4 5 Z" fill="#222"/></svg>
<div class="a" style="left:1015px;top:512px;width:619px;height:21px;background:#dcdcdc;border:1px solid #ababab"></div>
<div class="t " style="left:1019px;top:514.5px;font-size:12.5px;line-height:16px;">homeIcon : StatusImageSwitcher</div>
<div class="a" style="left:1015px;top:534px;width:619px;height:454px;background:#f2f2f2;border:1px solid #9c9c9c"></div>
<div class="a hdr" style="left:1016px;top:535px;width:603px;height:25px;"></div>
<div class="a" style="left:1259px;top:536px;width:1px;height:24px;background:#b8b8b8"></div>
<div class="t " style="left:1019px;top:540.0px;font-size:12.5px;line-height:16px;">Property</div>
<div class="t " style="left:1264px;top:540.0px;font-size:12.5px;line-height:16px;">Value</div>
<div class="a" style="left:1016px;top:560px;width:603px;height:21px;background:#c4fdfd"></div>
<div class="a" style="left:1016px;top:580px;width:603px;height:1px;background:#b9b9b9"></div>
<div class="a" style="left:1259px;top:560px;width:1px;height:21px;background:#b9b9b9"></div>
<div class="t " style="left:1039px;top:563.0px;font-size:12.5px;line-height:16px;color:#2e2e2e;">textFormat</div>
<div class="t " style="left:1263px;top:563.0px;font-size:12.5px;line-height:16px;">AutoText</div>
<div class="a" style="left:1016px;top:581px;width:603px;height:22px;background:#e6fefe"></div>
<div class="a" style="left:1016px;top:602px;width:603px;height:1px;background:#b9b9b9"></div>
<div class="a" style="left:1259px;top:581px;width:1px;height:22px;background:#b9b9b9"></div>
<div class="t " style="left:1039px;top:584.5px;font-size:12.5px;line-height:16px;color:#2e2e2e;font-weight:bold;">pixmap</div>
<svg class="a" style="left:1263px;top:583px" width="18" height="18" viewBox="0 0 48 48"><rect x="0" y="0" width="48" height="48" fill="#a9a9a9"/><circle cx="14.7" cy="23.3" r="9.3" fill="#b8b8b8" stroke="#444" stroke-width="1.5"/><path d="M14.7 23.3 V14 A9.3 9.3 0 0 1 24 23.3 Z M14.7 23.3 V32.6 A9.3 9.3 0 0 1 5.4 23.3 Z" fill="#000"/><path d="M22.5 14 L30.5 6.5" stroke="#000" stroke-width="3.5"/><path d="M23 32 L31.5 39.5" stroke="#000" stroke-width="3.5"/><circle cx="24" cy="24.5" r="22" fill="none" stroke="#f00" stroke-width="4.5"/><path d="M8.3 39.7 L39.6 8" stroke="#f00" stroke-width="4.5"/><text x="28" y="35" font-family="Liberation Sans" font-weight="bold" font-size="22" fill="#e8e000">Z</text></svg>
<div class="t " style="left:1287px;top:584.5px;font-size:12.5px;line-height:16px;">ref_z_not.png</div>
<div class="a" style="left:1016px;top:603px;width:603px;height:22px;background:#c4fdfd"></div>
<div class="a" style="left:1016px;top:624px;width:603px;height:1px;background:#b9b9b9"></div>
<div class="a" style="left:1259px;top:603px;width:1px;height:22px;background:#b9b9b9"></div>
<div class="t " style="left:1039px;top:606.5px;font-size:12.5px;line-height:16px;color:#2e2e2e;">scaledContents</div>
<div class="a" style="left:1266px;top:608px;width:13px;height:13px;background:#a3b98a;border:1px solid #7c9064;border-radius:2px"></div>
<svg class="a" style="left:1268px;top:610px;" width="9" height="9" viewBox="0 0 9 9"><path d="M2 2 L7 7 M7 2 L2 7" stroke="#fff" stroke-width="1.8"/></svg>
<div class="a" style="left:1016px;top:625px;width:603px;height:21px;background:#e6fefe"></div>
<div class="a" style="left:1016px;top:645px;width:603px;height:1px;background:#b9b9b9"></div>
<div class="a" style="left:1259px;top:625px;width:1px;height:21px;background:#b9b9b9"></div>
<div class="t " style="left:1039px;top:628.0px;font-size:12.5px;line-height:16px;color:#2e2e2e;">alignment</div>
<svg class="a" style="left:1023px;top:632.0px;" width="11" height="7" viewBox="0 0 11 7"><path d="M0 0.5 H10 L5 6 Z" fill="#222"/></svg>
<div class="t " style="left:1263px;top:628.0px;font-size:12.5px;line-height:16px;">AlignLeft, AlignVCenter</div>
<div class="a" style="left:1016px;top:646px;width:603px;height:21px;background:#c4fdfd"></div>
<div class="a" style="left:1016px;top:666px;width:603px;height:1px;background:#b9b9b9"></div>
<div class="a" style="left:1259px;top:646px;width:1px;height:21px;background:#b9b9b9"></div>
<div class="t " style="left:1059px;top:649.0px;font-size:12.5px;line-height:16px;color:#2e2e2e;">Horizontal</div>
<div class="t " style="left:1263px;top:649.0px;font-size:12.5px;line-height:16px;">AlignLeft</div>
<div class="a" style="left:1016px;top:667px;width:603px;height:21px;background:#e6fefe"></div>
<div class="a" style="left:1016px;top:687px;width:603px;height:1px;background:#b9b9b9"></div>
<div class="a" style="left:1259px;top:667px;width:1px;height:21px;background:#b9b9b9"></div>
<div class="t " style="left:1059px;top:670.0px;font-size:12.5px;line-height:16px;color:#2e2e2e;">Vertical</div>
<div class="t " style="left:1263px;top:670.0px;font-size:12.5px;line-height:16px;">AlignVCenter</div>
<div class="a" style="left:1016px;top:688px;width:603px;height:22px;background:#c4fdfd"></div>
<div class="a" style="left:1016px;top:709px;width:603px;height:1px;background:#b9b9b9"></div>
<div class="a" style="left:1259px;top:688px;width:1px;height:22px;background:#b9b9b9"></div>
<div class="t " style="left:1039px;top:691.5px;font-size:12.5px;line-height:16px;color:#2e2e2e;">wordWrap</div>
<div class="a" style="left:1266px;top:693px;width:13px;height:13px;background:linear-gradient(#f8f8f8,#e8e8e8);border:1px solid #b4b4b4;border-radius:2px"></div>
<div class="a" style="left:1016px;top:710px;width:603px;height:21px;background:#e6fefe"></div>
<div class="a" style="left:1016px;top:730px;width:603px;height:1px;background:#b9b9b9"></div>
<div class="a" style="left:1259px;top:710px;width:1px;height:21px;background:#b9b9b9"></div>
<div class="t " style="left:1039px;top:713.0px;font-size:12.5px;line-height:16px;color:#2e2e2e;">margin</div>
<div class="t " style="left:1263px;top:713.0px;font-size:12.5px;line-height:16px;">0</div>
<div class="a" style="left:1016px;top:731px;width:603px;height:22px;background:#c4fdfd"></div>
<div class="a" style="left:1016px;top:752px;width:603px;height:1px;background:#b9b9b9"></div>
<div class="a" style="left:1259px;top:731px;width:1px;height:22px;background:#b9b9b9"></div>
<div class="t " style="left:1039px;top:734.5px;font-size:12.5px;line-height:16px;color:#2e2e2e;">indent</div>
<div class="t " style="left:1263px;top:734.5px;font-size:12.5px;line-height:16px;">-1</div>
<div class="a" style="left:1016px;top:753px;width:603px;height:21px;background:#e6fefe"></div>
<div class="a" style="left:1016px;top:773px;width:603px;height:1px;background:#b9b9b9"></div>
<div class="a" style="left:1259px;top:753px;width:1px;height:21px;background:#b9b9b9"></div>
<div class="t " style="left:1039px;top:756.0px;font-size:12.5px;line-height:16px;color:#2e2e2e;">openExternalLinks</div>
<div class="a" style="left:1266px;top:758px;width:13px;height:13px;background:linear-gradient(#f8f8f8,#e8e8e8);border:1px solid #b4b4b4;border-radius:2px"></div>
<div class="a" style="left:1016px;top:774px;width:603px;height:21px;background:#c4fdfd"></div>
<div class="a" style="left:1016px;top:794px;width:603px;height:1px;background:#b9b9b9"></div>
<div class="a" style="left:1259px;top:774px;width:1px;height:21px;background:#b9b9b9"></div>
<div class="t " style="left:1039px;top:777.0px;font-size:12.5px;line-height:16px;color:#2e2e2e;">textInteractionFlags</div>
<svg class="a" style="left:1026px;top:779.0px;" width="6" height="11" viewBox="0 0 6 11"><path d="M0.5 0 V10 L5.5 5 Z" fill="#222"/></svg>
<div class="t " style="left:1263px;top:777.0px;font-size:12.5px;line-height:16px;">LinksAccessibleByMouse</div>
<div class="a" style="left:1016px;top:794px;width:603px;height:22px;background:#b4b4b4"></div>
<div class="t " style="left:1039px;top:797.5px;font-size:12.5px;line-height:16px;color:#fff;font-weight:bold;">ImageSwitcher</div>
<svg class="a" style="left:1023px;top:801.5px;" width="11" height="7" viewBox="0 0 11 7"><path d="M0 0.5 H10 L5 6 Z" fill="#222"/></svg>
<div class="a" style="left:1016px;top:816px;width:603px;height:21px;background:#e8c3fd"></div>
<div class="a" style="left:1016px;top:836px;width:603px;height:1px;background:#c9a9c0"></div>
<div class="a" style="left:1259px;top:816px;width:1px;height:21px;background:#c9a9c0"></div>
<div class="t " style="left:1039px;top:819.0px;font-size:12.5px;line-height:16px;color:#2e2e2e;font-weight:bold;">image_number</div>
<div class="t " style="left:1263px;top:819.0px;font-size:12.5px;line-height:16px;">0</div>
<div class="a" style="left:1016px;top:837px;width:603px;height:20px;background:#8fac6e"></div>
<div class="t " style="left:1039px;top:839.5px;font-size:12.5px;line-height:16px;color:#fff;font-weight:bold;">image_list</div>
<svg class="a" style="left:1026px;top:841.5px;" width="6" height="11" viewBox="0 0 6 11"><path d="M0.5 0 V10 L5.5 5 Z" fill="#222"/></svg>
<div class="a" style="left:1016px;top:857px;width:603px;height:21px;background:#b4b4b4"></div>
<div class="t " style="left:1039px;top:860.0px;font-size:12.5px;line-height:16px;color:#fff;font-weight:bold;">StatusImageSwitcher</div>
<svg class="a" style="left:1023px;top:864.0px;" width="11" height="7" viewBox="0 0 11 7"><path d="M0 0.5 H10 L5 6 Z" fill="#222"/></svg>
<div class="a" style="left:1016px;top:878px;width:603px;height:23px;background:#ffe1f6"></div>
<div class="a" style="left:1016px;top:900px;width:603px;height:1px;background:#c9a9c0"></div>
<div class="a" style="left:1259px;top:878px;width:1px;height:23px;background:#c9a9c0"></div>
<div class="t " style="left:1039px;top:882.0px;font-size:12.5px;line-height:16px;color:#2e2e2e;">watch_spindle</div>
<div class="a" style="left:1266px;top:883px;width:13px;height:13px;background:linear-gradient(#f8f8f8,#e8e8e8);border:1px solid #b4b4b4;border-radius:2px"></div>
<div class="a" style="left:1016px;top:901px;width:603px;height:22px;background:#ffc0ef"></div>
<div class="a" style="left:1016px;top:922px;width:603px;height:1px;background:#c9a9c0"></div>
<div class="a" style="left:1259px;top:901px;width:1px;height:22px;background:#c9a9c0"></div>
<div class="t " style="left:1039px;top:904.5px;font-size:12.5px;line-height:16px;color:#2e2e2e;font-weight:bold;">watch_all_homed</div>
<div class="a" style="left:1266px;top:906px;width:13px;height:13px;background:linear-gradient(#f8f8f8,#e8e8e8);border:1px solid #b4b4b4;border-radius:2px"></div>
<div class="a" style="left:1016px;top:923px;width:603px;height:22px;background:#ffe1f6"></div>
<div class="a" style="left:1016px;top:944px;width:603px;height:1px;background:#c9a9c0"></div>
<div class="a" style="left:1259px;top:923px;width:1px;height:22px;background:#c9a9c0"></div>
<div class="t " style="left:1039px;top:926.5px;font-size:12.5px;line-height:16px;color:#2e2e2e;font-weight:bold;">watch_axis_homed</div>
<div class="a" style="left:1266px;top:928px;width:13px;height:13px;background:#a3b98a;border:1px solid #7c9064;border-radius:2px"></div>
<svg class="a" style="left:1268px;top:930px;" width="9" height="9" viewBox="0 0 9 9"><path d="M2 2 L7 7 M7 2 L2 7" stroke="#fff" stroke-width="1.8"/></svg>
<div class="a" style="left:1016px;top:945px;width:603px;height:22px;background:#ffc0ef"></div>
<div class="a" style="left:1016px;top:966px;width:603px;height:1px;background:#c9a9c0"></div>
<div class="a" style="left:1259px;top:945px;width:1px;height:22px;background:#c9a9c0"></div>
<div class="t " style="left:1039px;top:948.5px;font-size:12.5px;line-height:16px;color:#2e2e2e;">watch_hard_limits</div>
<div class="a" style="left:1266px;top:950px;width:13px;height:13px;background:linear-gradient(#f8f8f8,#e8e8e8);border:1px solid #b4b4b4;border-radius:2px"></div>
<div class="a" style="left:1016px;top:967px;width:603px;height:21px;background:#ffe1f6"></div>
<div class="a" style="left:1016px;top:987px;width:603px;height:1px;background:#c9a9c0"></div>
<div class="a" style="left:1259px;top:967px;width:1px;height:21px;background:#c9a9c0"></div>
<div class="t " style="left:1039px;top:970.0px;font-size:12.5px;line-height:16px;color:#2e2e2e;font-weight:bold;">axis_letter</div>
<svg class="a" style="left:1026px;top:972.0px;" width="6" height="11" viewBox="0 0 6 11"><path d="M0.5 0 V10 L5.5 5 Z" fill="#222"/></svg>
<div class="t " style="left:1263px;top:970.0px;font-size:12.5px;line-height:16px;">Z</div>
<div class="a" style="left:1261px;top:838px;width:343px;height:19px;background:linear-gradient(#f8f8f8,#dadada);border:1px solid #a0a0a0;border-radius:3px"></div>
<div class="t" style="left:1282.0px;width:300px;text-align:center;top:840.0px;font-size:12.5px;line-height:16px;">Change String List</div>
<div class="a" style="left:1605px;top:838px;width:14px;height:19px;background:linear-gradient(#f8f8f8,#dadada);border:1px solid #a0a0a0;border-radius:3px"></div>
<svg class="a" style="left:1607px;top:842px;" width="10" height="10" viewBox="0 0 10 10"><path d="M3 2 L1 5 L4 6 M1.5 5 C5 3 9 4 8 8" fill="none" stroke="#b00" stroke-width="1.3"/></svg>
<div class="a" style="left:1619px;top:535px;width:14px;height:452px;background:#e2e2e2;border-left:1px solid #d0d0d0"></div>
<svg class="a" style="left:1620px;top:538px;" width="12" height="9" viewBox="0 0 12 9"><path d="M1 7 H11 L6 2 Z" fill="#222"/></svg>
<svg class="a" style="left:1620px;top:977px;" width="12" height="9" viewBox="0 0 12 9"><path d="M1 2 H11 L6 7 Z" fill="#222"/></svg>
<div class="a" style="left:1621px;top:868px;width:10px;height:92px;background:linear-gradient(90deg,#f6f6f6,#e0e0e0);border:1px solid #a8a8a8;border-radius:5px"></div>
<div class="a" style="left:1016px;top:988px;width:110px;height:26px;background:linear-gradient(#dcdcdc,#d0d0d0);border:1px solid #a8a8a8;border-top:none;border-radius:0 0 3px 3px"></div>
<div class="t" style="left:1016.0px;width:110px;text-align:center;top:995.0px;font-size:12.5px;line-height:16px;">Signal/Slot Editor</div>
<div class="a" style="left:1128px;top:988px;width:87px;height:26px;background:linear-gradient(#dcdcdc,#d0d0d0);border:1px solid #a8a8a8;border-top:none;border-radius:0 0 3px 3px"></div>
<div class="t" style="left:1128.0px;width:87px;text-align:center;top:995.0px;font-size:12.5px;line-height:16px;">Action Editor</div>
<div class="a" style="left:1217px;top:988px;width:98px;height:29px;background:linear-gradient(#f0f0f0,#e2e2e2);border:1px solid #a8a8a8;border-top:none;border-radius:0 0 3px 3px"></div>
<div class="t" style="left:1217.0px;width:98px;text-align:center;top:995.5px;font-size:12.5px;line-height:16px;">Property Editor</div>
</body></html>
